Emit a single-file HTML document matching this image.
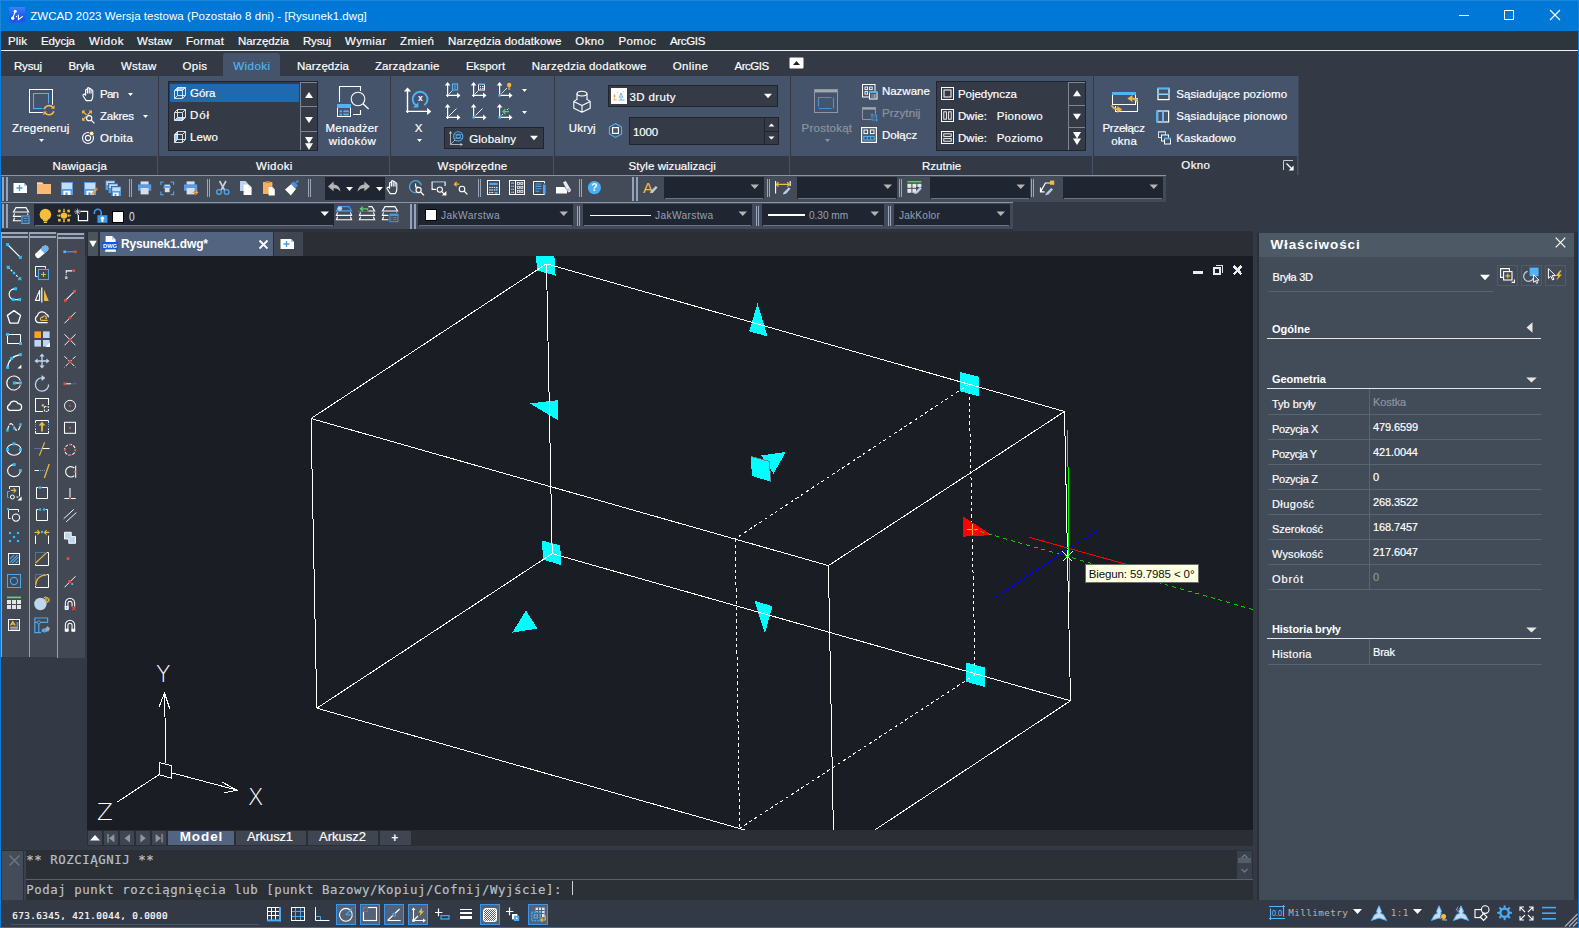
<!DOCTYPE html>
<html lang="pl">
<head>
<meta charset="utf-8">
<title>ZWCAD 2023 Wersja testowa (Pozostało 8 dni) - [Rysunek1.dwg]</title>
<style>
*{margin:0;padding:0;box-sizing:border-box}
html,body{width:1579px;height:928px;overflow:hidden;background:#333a46}
body{position:relative;font-family:'Liberation Sans',sans-serif;font-size:11.5px;color:#fff}
#app{position:absolute;left:0;top:0;width:1579px;height:928px;overflow:hidden}
#app div,#app svg,#app .t{position:absolute}
#app svg{overflow:visible;display:block}
.t{white-space:pre;line-height:20px;height:20px;-webkit-text-stroke:0.18px currentColor}
</style>
</head>
<body>
<div id="app">
<div style="left:0px;top:0px;width:1579px;height:928px;background:#333a46;"></div>
<div style="left:0px;top:0px;width:1579px;height:31px;background:#0078d7;"></div>
<span class="t" style="left:30.20px;top:6.02px;font-size:11.5px;color:#fff;letter-spacing:0.043px;-webkit-text-stroke:0;">ZWCAD 2023 Wersja testowa (Pozostało 8 dni) - [Rysunek1.dwg]</span>
<div style="left:0px;top:0px;width:1579px;height:1px;background:#1a86dc;"></div>
<div style="left:0px;top:0px;width:1px;height:31px;background:#1a86dc;"></div>
<div style="left:1578px;top:0px;width:1px;height:31px;background:#1a86dc;"></div>
<svg style="left:9px;top:7px;" width="16" height="16" viewBox="0 0 16 16"><defs><linearGradient id="zw" x1="0" y1="0" x2="0" y2="1"><stop offset="0" stop-color="#3d80ff"/><stop offset="0.75" stop-color="#1650f0"/><stop offset="1" stop-color="#3058e8"/></linearGradient></defs><rect width="16" height="16" fill="url(#zw)"/><path d="M6.2 4.4L3.8 11" stroke="#fff" stroke-width="1.1" fill="none"/><circle cx="6.2" cy="4.2" r="1.5" fill="#fff"/><circle cx="3.7" cy="11.2" r="1.7" fill="#fff"/><circle cx="7.5" cy="9.5" r="0.7" fill="#fff"/><path d="M9.4 7.8V12.6L13.8 9.2" stroke="#fff" stroke-width="1.1" fill="none"/></svg>
<svg style="left:1458px;top:9px;" width="103" height="12" viewBox="0 0 103 12"><path d="M1 6.5h10" stroke="#fff" stroke-width="1" fill="none"/><rect x="46.5" y="1.5" width="9" height="9" fill="none" stroke="#fff" stroke-width="1"/><path d="M92 1l10 10M102 1l-10 10" stroke="#fff" stroke-width="1.1" fill="none"/></svg>
<div style="left:1px;top:31px;width:1577px;height:19px;background:#2d353d;"></div>
<div style="left:1px;top:50px;width:1577px;height:1px;background:#f2f2f2;"></div>
<span class="t" style="left:8.00px;top:30.92px;font-size:11.5px;color:#fff;letter-spacing:0.156px;">Plik</span>
<span class="t" style="left:41.00px;top:30.92px;font-size:11.5px;color:#fff;letter-spacing:-0.106px;">Edycja</span>
<span class="t" style="left:89.00px;top:30.92px;font-size:11.5px;color:#fff;letter-spacing:0.637px;">Widok</span>
<span class="t" style="left:137.00px;top:30.92px;font-size:11.5px;color:#fff;letter-spacing:0.125px;">Wstaw</span>
<span class="t" style="left:186.00px;top:30.92px;font-size:11.5px;color:#fff;letter-spacing:0.316px;">Format</span>
<span class="t" style="left:238.00px;top:30.92px;font-size:11.5px;color:#fff;letter-spacing:-0.098px;">Narzędzia</span>
<span class="t" style="left:303.00px;top:30.92px;font-size:11.5px;color:#fff;letter-spacing:-0.191px;">Rysuj</span>
<span class="t" style="left:345.00px;top:30.92px;font-size:11.5px;color:#fff;letter-spacing:0.425px;">Wymiar</span>
<span class="t" style="left:400.00px;top:30.92px;font-size:11.5px;color:#fff;letter-spacing:0.512px;">Zmień</span>
<span class="t" style="left:448.00px;top:30.92px;font-size:11.5px;color:#fff;letter-spacing:0.156px;">Narzędzia dodatkowe</span>
<span class="t" style="left:575.30px;top:30.92px;font-size:11.5px;color:#fff;letter-spacing:0.400px;">Okno</span>
<span class="t" style="left:618.40px;top:30.92px;font-size:11.5px;color:#fff;letter-spacing:0.451px;">Pomoc</span>
<span class="t" style="left:670.00px;top:30.92px;font-size:11.5px;color:#fff;letter-spacing:-0.353px;">ArcGIS</span>
<div style="left:1px;top:51px;width:1577px;height:25px;background:#333a46;"></div>
<div style="left:223px;top:53px;width:57px;height:23px;background:#46546b;border-radius:3px 3px 0 0;"></div>
<span class="t" style="left:14.00px;top:55.72px;font-size:11.5px;color:#fff;letter-spacing:-0.191px;">Rysuj</span>
<span class="t" style="left:68.40px;top:55.72px;font-size:11.5px;color:#fff;letter-spacing:-0.026px;">Bryła</span>
<span class="t" style="left:121.00px;top:55.72px;font-size:11.5px;color:#fff;letter-spacing:0.200px;">Wstaw</span>
<span class="t" style="left:182.50px;top:55.72px;font-size:11.5px;color:#fff;letter-spacing:0.281px;">Opis</span>
<span class="t" style="left:233.30px;top:55.72px;font-size:11.5px;color:#4fb6f0;letter-spacing:0.437px;">Widoki</span>
<span class="t" style="left:297.00px;top:55.72px;font-size:11.5px;color:#fff;letter-spacing:0.027px;">Narzędzia</span>
<span class="t" style="left:375.00px;top:55.72px;font-size:11.5px;color:#fff;letter-spacing:0.100px;">Zarządzanie</span>
<span class="t" style="left:465.90px;top:55.72px;font-size:11.5px;color:#fff;letter-spacing:0.033px;">Eksport</span>
<span class="t" style="left:531.70px;top:55.72px;font-size:11.5px;color:#fff;letter-spacing:0.234px;">Narzędzia dodatkowe</span>
<span class="t" style="left:672.80px;top:55.72px;font-size:11.5px;color:#fff;letter-spacing:0.350px;">Online</span>
<span class="t" style="left:734.40px;top:55.72px;font-size:11.5px;color:#fff;letter-spacing:-0.433px;">ArcGIS</span>
<div style="left:1px;top:76px;width:157px;height:80px;background:#46546b;"></div>
<div style="left:157px;top:156px;width:1px;height:19px;background:#46546b;"></div>
<span class="t" style="left:52.60px;top:156.02px;font-size:11.5px;color:#fff;letter-spacing:0.142px;">Nawigacja</span>
<div style="left:159px;top:76px;width:231px;height:80px;background:#46546b;"></div>
<div style="left:389px;top:156px;width:1px;height:19px;background:#46546b;"></div>
<span class="t" style="left:255.90px;top:156.02px;font-size:11.5px;color:#fff;letter-spacing:0.397px;">Widoki</span>
<div style="left:391px;top:76px;width:163px;height:80px;background:#46546b;"></div>
<div style="left:553px;top:156px;width:1px;height:19px;background:#46546b;"></div>
<span class="t" style="left:437.60px;top:156.02px;font-size:11.5px;color:#fff;letter-spacing:0.247px;">Współrzędne</span>
<div style="left:555px;top:76px;width:235px;height:80px;background:#46546b;"></div>
<div style="left:789px;top:156px;width:1px;height:19px;background:#46546b;"></div>
<span class="t" style="left:628.60px;top:156.02px;font-size:11.5px;color:#fff;letter-spacing:0.048px;">Style wizualizacji</span>
<div style="left:791px;top:76px;width:302px;height:80px;background:#46546b;"></div>
<div style="left:1092px;top:156px;width:1px;height:19px;background:#46546b;"></div>
<span class="t" style="left:922.00px;top:156.02px;font-size:11.5px;color:#fff;letter-spacing:0.033px;">Rzutnie</span>
<div style="left:1094px;top:76px;width:204px;height:80px;background:#46546b;"></div>
<div style="left:1297px;top:156px;width:1px;height:19px;background:#46546b;"></div>
<span class="t" style="left:1181.30px;top:155.02px;font-size:11.5px;color:#fff;letter-spacing:0.400px;">Okno</span>
<div style="left:1298px;top:76px;width:1px;height:99px;background:#3c4658;"></div>
<div style="left:1px;top:175px;width:1165px;height:1px;background:#8895a8;"></div>
<div style="left:1px;top:176px;width:1165px;height:26px;background:#444b58;"></div>
<div style="left:1px;top:202px;width:1012px;height:1px;background:#8895a8;"></div>
<div style="left:1px;top:203px;width:1012px;height:26px;background:#444b58;"></div>
<div style="left:1px;top:229px;width:1012px;height:3px;background:#2e333b;"></div>
<div style="left:1013px;top:231px;width:240px;height:1px;background:#2c3037;"></div>
<svg style="left:29px;top:89px;" width="28" height="28" viewBox="0 0 28 28"><rect x="0.5" y="0.5" width="23" height="23" fill="none" stroke="#ffffff" stroke-width="1"/><rect x="4.5" y="4.5" width="15" height="15" fill="none" stroke="#4fb3f6" stroke-width="1"/><circle cx="20" cy="21.2" r="6.6" fill="#46546b"/><path d="M15.2 20.2A5 5 0 0 1 24 18.6M24.8 22.2A5 5 0 0 1 16 23.8" fill="none" stroke="#f0b840" stroke-width="1.6" /><path d="M25.6 16.2v3.6h-3.6z M14.4 26.2v-3.6h3.6z" fill="#f0b840" /></svg>
<span class="t" style="left:12.00px;top:118.02px;font-size:11.5px;color:#fff;letter-spacing:0.197px;">Zregeneruj</span>
<svg style="left:38px;top:138px;" width="8" height="6" viewBox="0 0 8 6"><path d="M1.00 1.00h5l-2.5 3z" fill="#fff"/></svg>
<svg style="left:82px;top:87px;" width="13" height="15" viewBox="0 0 13 15"><path d="M4.2 13.6 L1.3 9.3 Q0.4 7.6 1.8 7.2 Q2.8 7 3.6 8.3 V3.2 Q3.6 2.2 4.5 2.2 Q5.4 2.2 5.4 3.2 V1.6 Q5.4 0.6 6.3 0.6 Q7.2 0.6 7.2 1.6 V2.2 Q7.2 1.3 8.1 1.3 Q9 1.3 9 2.3 V3.5 Q9 2.7 9.9 2.7 Q10.8 2.7 10.8 3.7 V9.6 Q10.8 11.6 9.2 13.6 ZM5.4 3.2V6.5M7.2 2.2V6.5M9 3.5V6.5" fill="none" stroke="#ffffff" stroke-width="1.1" stroke-linejoin="round"/></svg>
<span class="t" style="left:100.00px;top:84.02px;font-size:11.5px;color:#fff;letter-spacing:-0.734px;">Pan</span>
<svg style="left:127px;top:92px;" width="8" height="6" viewBox="0 0 8 6"><path d="M1.00 1.00h5l-2.5 3z" fill="#fff"/></svg>
<svg style="left:82px;top:110px;" width="13" height="14" viewBox="0 0 13 14"><path d="M1 1.5L4.6 5.1M9 1.5L5.6 4.9M1 9.8L4.2 6.6" fill="none" stroke="#f0b840" stroke-width="1.3" /><path d="M0 0.5h3.6L0 4.1zM10 0.5h-3.6L10 4.1zM0 10.8h3.6L0 7.2z" fill="#f0b840" /><circle cx="7.2" cy="8.2" r="2.6" fill="none" stroke="#ffffff" stroke-width="1.1"/><path d="M9.2 10.2L12.4 13.4" fill="none" stroke="#ffffff" stroke-width="1.2" /></svg>
<span class="t" style="left:100.00px;top:106.02px;font-size:11.5px;color:#fff;letter-spacing:-0.231px;">Zakres</span>
<svg style="left:142px;top:114px;" width="8" height="6" viewBox="0 0 8 6"><path d="M1.00 1.00h5l-2.5 3z" fill="#fff"/></svg>
<svg style="left:82px;top:131px;" width="13" height="14" viewBox="0 0 13 14"><circle cx="6" cy="7" r="5.5" fill="none" stroke="#ffffff" stroke-width="1.1"/><circle cx="6" cy="7" r="2.6" fill="none" stroke="#ffffff" stroke-width="1.1"/><circle cx="9.6" cy="2.6" r="2.6" fill="#46546b"/><circle cx="9.6" cy="2.6" r="2" fill="#ffe08a"/><circle cx="9.6" cy="2.6" r="1" fill="#fff"/></svg>
<span class="t" style="left:100.00px;top:128.02px;font-size:11.5px;color:#fff;letter-spacing:0.334px;">Orbita</span>
<div style="left:168px;top:81px;width:150px;height:70px;background:#343b47;border:1px solid #20252d;"></div>
<div style="left:300px;top:82px;width:1px;height:68px;background:#7d8693;"></div>
<div style="left:300px;top:82px;width:17px;height:1px;background:#7d8693;"></div>
<div style="left:300px;top:106px;width:17px;height:1px;background:#7d8693;"></div>
<div style="left:300px;top:131px;width:17px;height:1px;background:#7d8693;"></div>
<div style="left:170px;top:84px;width:129px;height:18px;background:#1f69ae;"></div>
<svg style="left:174px;top:87px;" width="12" height="12" viewBox="0 0 12 12"><path d="M0.5 3.5L3.5 0.5H11.5L8.5 3.5Z" fill="#9fd0fa" /><path d="M0.5 3.5H8.5V11.5H0.5ZM3.5 0.5H11.5V8.5H3.5ZM0.5 3.5L3.5 0.5M8.5 3.5L11.5 0.5M8.5 11.5L11.5 8.5M0.5 11.5L3.5 8.5" fill="none" stroke="#e8eef5" stroke-width="0.9" /></svg>
<span class="t" style="left:190.00px;top:83.32px;font-size:11.5px;color:#fff;letter-spacing:-0.059px;">Góra</span>
<svg style="left:174px;top:109px;" width="12" height="12" viewBox="0 0 12 12"><path d="M0.5 11.5L3.5 8.5H11.5L8.5 11.5Z" fill="#9fd0fa" /><path d="M0.5 3.5H8.5V11.5H0.5ZM3.5 0.5H11.5V8.5H3.5ZM0.5 3.5L3.5 0.5M8.5 3.5L11.5 0.5M8.5 11.5L11.5 8.5M0.5 11.5L3.5 8.5" fill="none" stroke="#e8eef5" stroke-width="0.9" /></svg>
<span class="t" style="left:190.00px;top:105.32px;font-size:11.5px;color:#fff;letter-spacing:0.867px;">Dół</span>
<svg style="left:174px;top:131px;" width="12" height="12" viewBox="0 0 12 12"><path d="M0.5 3.5L3.5 0.5V8.5L0.5 11.5Z" fill="#9fd0fa" /><path d="M0.5 3.5H8.5V11.5H0.5ZM3.5 0.5H11.5V8.5H3.5ZM0.5 3.5L3.5 0.5M8.5 3.5L11.5 0.5M8.5 11.5L11.5 8.5M0.5 11.5L3.5 8.5" fill="none" stroke="#e8eef5" stroke-width="0.9" /></svg>
<span class="t" style="left:190.00px;top:127.32px;font-size:11.5px;color:#fff;letter-spacing:0.100px;">Lewo</span>
<svg style="left:300px;top:81px;" width="18" height="70" viewBox="0 0 18 70"><path d="M5 17L9 11L13 17Z" fill="#ffffff" /><path d="M5 36H13L9 42Z" fill="#ffffff" /><path d="M5 55.9H13L9 62.5ZM5 62.3H13L9 68.89999999999999Z" fill="#ffffff" /></svg>
<svg style="left:337px;top:85px;" width="33" height="33" viewBox="0 0 33 33"><path d="M2.5 17V1.5H23.5V6M23.5 25V29.5H16" fill="none" stroke="#ffffff" stroke-width="1.1" /><circle cx="21" cy="14" r="6.8" fill="none" stroke="#ffffff" stroke-width="1.1"/><path d="M26 18.8L31.6 24" fill="none" stroke="#ffffff" stroke-width="1.3" /><rect x="0" y="19" width="15" height="14" fill="#46546b"/><rect x="0.5" y="19.5" width="13" height="12" fill="none" stroke="#ffffff" stroke-width="1"/><rect x="0" y="19" width="14" height="4" fill="#4fb3f6"/><rect x="2.6" y="25.4" width="2.4" height="1.8" fill="#4fb3f6"/><rect x="6.4" y="25.4" width="5.4" height="1.8" fill="#4fb3f6"/><rect x="2.6" y="28.6" width="2.4" height="1.8" fill="#4fb3f6"/><rect x="6.4" y="28.6" width="5.4" height="1.8" fill="#4fb3f6"/></svg>
<span class="t" style="left:325.50px;top:118.02px;font-size:11.5px;color:#fff;letter-spacing:0.223px;">Menadżer</span>
<span class="t" style="left:328.70px;top:130.52px;font-size:11.5px;color:#fff;letter-spacing:0.515px;">widoków</span>
<svg style="left:404px;top:87px;" width="28" height="28" viewBox="0 0 28 28"><path d="M3.5 25.9V1.7M2.0 24.4H26" fill="none" stroke="#ffffff" stroke-width="1.4" /><path d="M3.5 0.39999999999999997l3.6 4.2h-7.2z M27.3 24.4l-4.2 -3.6v7.2z" fill="#ffffff" /><path d="M12.4 18.6A7.4 7.4 0 1 1 20.4 18.2" fill="none" stroke="#4fb3f6" stroke-width="1.9" /><path d="M9 20.4h5.4v-5.2z" fill="#4fb3f6" /><text x="16.4" y="14.2" font-size="8.5" font-weight="700" text-anchor="middle" fill="#fff" font-family="Liberation Sans,sans-serif">x</text></svg>
<span class="t" style="left:414.80px;top:118.02px;font-size:11.5px;color:#fff;">X</span>
<svg style="left:416px;top:138px;" width="8" height="6" viewBox="0 0 8 6"><path d="M1.00 1.00h5l-2.5 3z" fill="#fff"/></svg>
<svg style="left:445px;top:82px;" width="16" height="16" viewBox="0 0 16 16"><path d="M2.6 14.9V1.4M1.1 13.4H14.2" fill="none" stroke="#ffffff" stroke-width="1.2" /><path d="M2.6 0.10000000000000003l2.8000000000000003 3.4000000000000004h-5.6000000000000005z M15.5 13.4l-3.4000000000000004 -2.8000000000000003v5.6000000000000005z" fill="#ffffff" /><path d="M3.5 12.5L7.5 8.5" fill="none" stroke="#ffffff" stroke-width="0.8" /><rect x="7.5" y="2" width="5" height="6" fill="none" stroke="#4fb3f6" stroke-width="1.2"/><path d="M9 4h2M9 6h2" fill="none" stroke="#4fb3f6" stroke-width="0.9" /></svg>
<svg style="left:471px;top:82px;" width="16" height="16" viewBox="0 0 16 16"><path d="M2.6 14.9V1.4M1.1 13.4H14.2" fill="none" stroke="#ffffff" stroke-width="1.2" /><path d="M2.6 0.10000000000000003l2.8000000000000003 3.4000000000000004h-5.6000000000000005z M15.5 13.4l-3.4000000000000004 -2.8000000000000003v5.6000000000000005z" fill="#ffffff" /><path d="M3.5 12.5L7.5 8.5" fill="none" stroke="#ffffff" stroke-width="0.8" /><rect x="7.5" y="2.5" width="6" height="5.5" fill="none" stroke="#ffffff" stroke-width="1"/><rect x="7" y="1.5" width="7" height="1.4" fill="#4fb3f6"/><path d="M9 4.6h1M11 4.6h1.6M9 6.4h1M11 6.4h1.6" fill="none" stroke="#ffffff" stroke-width="0.9" /></svg>
<svg style="left:497px;top:82px;" width="16" height="16" viewBox="0 0 16 16"><path d="M2.6 13.4V1.4M2.6 13.4H14.2" fill="none" stroke="#ffffff" stroke-width="1.2" /><path d="M2.6 0.10000000000000003l2.8000000000000003 3.4000000000000004h-5.6000000000000005z M15.5 13.4l-3.4000000000000004 -2.8000000000000003v5.6000000000000005z" fill="#ffffff" /><rect x="1.4" y="12.2" width="2.4" height="2.4" fill="#4fb3f6"/><path d="M4.4 11.6L10 6" fill="none" stroke="#ffffff" stroke-width="0.8" /><circle cx="12.2" cy="3" r="2.2" fill="#f0b840"/><rect x="11.2" y="5.4" width="2" height="1.2" fill="#f0b840"/><rect x="11.2" y="6.9" width="2" height="0.8" fill="#f0b840"/></svg>
<svg style="left:521px;top:88px;" width="8" height="6" viewBox="0 0 8 6"><path d="M1.00 1.00h5l-2.5 3z" fill="#fff"/></svg>
<svg style="left:445px;top:104px;" width="16" height="16" viewBox="0 0 16 16"><path d="M2.6 14.9V1.4M1.1 13.4H14.2" fill="none" stroke="#ffffff" stroke-width="1.2" /><path d="M2.6 0.10000000000000003l2.8000000000000003 3.4000000000000004h-5.6000000000000005z M15.5 13.4l-3.4000000000000004 -2.8000000000000003v5.6000000000000005z" fill="#ffffff" /><path d="M3.5 12.5L11.5 4.5" fill="none" stroke="#ffffff" stroke-width="0.9" /></svg>
<svg style="left:471px;top:104px;" width="16" height="16" viewBox="0 0 16 16"><path d="M2.6 13.4V1.4M2.6 13.4H14.2" fill="none" stroke="#ffffff" stroke-width="1.2" /><path d="M2.6 0.10000000000000003l2.8000000000000003 3.4000000000000004h-5.6000000000000005z M15.5 13.4l-3.4000000000000004 -2.8000000000000003v5.6000000000000005z" fill="#ffffff" /><rect x="1.4" y="12.2" width="2.4" height="2.4" fill="#4fb3f6"/><path d="M4.6 11.4L11.5 4.5" fill="none" stroke="#ffffff" stroke-width="0.9" /></svg>
<svg style="left:497px;top:104px;" width="16" height="16" viewBox="0 0 16 16"><path d="M2.6 13.4V1.4M2.6 13.4H14.2" fill="none" stroke="#ffffff" stroke-width="1.2" /><path d="M2.6 0.10000000000000003l2.8000000000000003 3.4000000000000004h-5.6000000000000005z M15.5 13.4l-3.4000000000000004 -2.8000000000000003v5.6000000000000005z" fill="#ffffff" /><rect x="1.4" y="12.2" width="2.4" height="2.4" fill="#4fb3f6"/><path d="M4.6 11.4L6 10M10 6L11.5 4.5" fill="none" stroke="#ffffff" stroke-width="0.8" /><path d="M12 7.6H6.2M8.4 5.2L6 7.6L8.4 10" fill="none" stroke="#5fd068" stroke-width="1.3" /></svg>
<svg style="left:521px;top:110px;" width="8" height="6" viewBox="0 0 8 6"><path d="M1.00 1.00h5l-2.5 3z" fill="#fff"/></svg>
<div style="left:444px;top:127px;width:100px;height:22px;background:#343b47;border:1px solid #20252d;"></div>
<svg style="left:448px;top:131px;" width="16" height="16" viewBox="0 0 16 16"><path d="M2.5 13.5V1.5M2.5 13.5H14M2.5 13.5L7 9" fill="none" stroke="#c9ced6" stroke-width="0.8" /><path d="M2.5 0l1.6 2.6h-3.2zM15 13.5l-2.6 1.6v-3.2z" fill="#c9ced6" /><circle cx="10.2" cy="5.4" r="4.6" fill="none" stroke="#4fb3f6" stroke-width="1.1"/><circle cx="10.2" cy="5.4" r="2.2" fill="none" stroke="#4fb3f6" stroke-width="1"/><path d="M6.2 3.2q4 2 8 0M6.2 7.6q4-2 8 0" fill="none" stroke="#4fb3f6" stroke-width="0.7" /></svg>
<span class="t" style="left:469.20px;top:129.02px;font-size:11.5px;color:#fff;letter-spacing:0.216px;">Globalny</span>
<svg style="left:529px;top:134px;" width="11" height="7" viewBox="0 0 11 7"><path d="M1.00 1.75h8l-4.0 4.5z" fill="#fff"/></svg>
<svg style="left:573px;top:90px;" width="18" height="23" viewBox="0 0 18 23"><ellipse cx="9" cy="3.6" rx="5" ry="2.4" fill="none" stroke="#ffffff" stroke-width="1.1"/><path d="M4 3.6V10M14 3.6V10" fill="none" stroke="#ffffff" stroke-width="1.1" /><path d="M4 9.4L0.8 11.4V18.2L9 22.2L17.2 18.2V11.4L14 9.4M0.8 11.6L9 15.4L17.2 11.6M9 15.4V22" fill="none" stroke="#ffffff" stroke-width="1.1" stroke-linejoin="round"/></svg>
<span class="t" style="left:568.70px;top:118.02px;font-size:11.5px;color:#fff;letter-spacing:0.199px;">Ukryj</span>
<div style="left:608px;top:85px;width:170px;height:22px;background:#343b47;border:1px solid #20252d;"></div>
<svg style="left:611px;top:88px;" width="16" height="16" viewBox="0 0 16 16"><rect x="0" y="0" width="16" height="16" fill="#fff"/><path d="M2 8h3M3.5 6v6M2 12h4" fill="none" stroke="#f0b45a" stroke-width="0.9" /><path d="M8 10l2-5l2 5M7.5 12h6M10 8v4" fill="none" stroke="#6aa6e0" stroke-width="0.9" /><path d="M6 4.5h1M12 3.5h1" fill="none" stroke="#f0b45a" stroke-width="0.8" /></svg>
<span class="t" style="left:629.40px;top:86.72px;font-size:11.5px;color:#fff;letter-spacing:0.390px;">3D druty</span>
<svg style="left:763px;top:92px;" width="11" height="7" viewBox="0 0 11 7"><path d="M1.00 1.75h8l-4.0 4.5z" fill="#fff"/></svg>
<svg style="left:608px;top:123px;" width="15" height="15" viewBox="0 0 15 15"><path d="M7.5 0.6L13.6 4V11L7.5 14.4L1.4 11V4Z" fill="none" stroke="#4fb3f6" stroke-width="1.1" /><rect x="4.6" y="4.6" width="5.8" height="5.8" fill="none" stroke="#ffffff" stroke-width="1.2"/></svg>
<div style="left:629px;top:117px;width:150px;height:28px;background:#343b47;border:1px solid #20252d;"></div>
<div style="left:764px;top:118px;width:1px;height:26px;background:#20252d;"></div>
<div style="left:764px;top:131px;width:14px;height:1px;background:#20252d;"></div>
<span class="t" style="left:632.90px;top:121.82px;font-size:11.5px;color:#fff;letter-spacing:-0.098px;">1000</span>
<svg style="left:767px;top:121px;" width="10" height="20" viewBox="0 0 10 20"><path d="M1.5 5.5l3-3l3 3z M1.5 15.5l3 3l3-3z" fill="#fff"/></svg>
<svg style="left:814px;top:89px;" width="24" height="24" viewBox="0 0 24 24"><rect x="0" y="0" width="24" height="3.4" fill="#a2a8b1"/><rect x="0.5" y="0.5" width="23" height="23" fill="none" stroke="#9097a1" stroke-width="1"/><path d="M4.5 8.5H19.5V19.5H4.5Z" fill="none" stroke="#4b8fc8" stroke-width="1.2" stroke-dasharray="13 2 11 2"/></svg>
<span class="t" style="left:801.60px;top:118.02px;font-size:11.5px;color:#8e949d;letter-spacing:0.228px;">Prostokąt</span>
<svg style="left:824px;top:138px;" width="8" height="6" viewBox="0 0 8 6"><path d="M1.00 1.00h5l-2.5 3z" fill="#8e949d"/></svg>
<svg style="left:862px;top:84px;" width="16" height="16" viewBox="0 0 16 16"><rect x="0.5" y="0.5" width="12.5" height="12.5" fill="none" stroke="#ffffff" stroke-width="1"/><rect x="3" y="3" width="2.6" height="2.6" fill="none" stroke="#ffffff" stroke-width="0.9"/><rect x="7.6" y="3" width="2.6" height="2.6" fill="none" stroke="#ffffff" stroke-width="0.9"/><rect x="3" y="7.6" width="2.6" height="2.6" fill="none" stroke="#ffffff" stroke-width="0.9"/><rect x="7" y="7" width="9" height="9" fill="#46546b"/><rect x="7.5" y="8.5" width="7.5" height="6.5" fill="none" stroke="#ffffff" stroke-width="1"/><rect x="7" y="7" width="8.5" height="2" fill="#4fb3f6"/><path d="M9.5 11h1M11.5 11h2M9.5 13h1M11.5 13h2" fill="none" stroke="#ffffff" stroke-width="0.9" /></svg>
<span class="t" style="left:881.90px;top:80.82px;font-size:11.5px;color:#fff;letter-spacing:0.008px;">Nazwane</span>
<svg style="left:862px;top:106px;" width="16" height="16" viewBox="0 0 16 16"><rect x="0" y="1" width="14" height="2.6" fill="#a2a8b1"/><path d="M0.5 1.5H13.5V8M9 13.5H0.5V1.5" fill="none" stroke="#9097a1" stroke-width="1" /><path d="M10 7.5V14H16M8.5 9H14.5V15.5" fill="none" stroke="#4b8fc8" stroke-width="1.1" /><path d="M11.5 12L13.5 10" fill="none" stroke="#4b8fc8" stroke-width="0.9" /></svg>
<span class="t" style="left:881.90px;top:102.82px;font-size:11.5px;color:#8e949d;letter-spacing:0.114px;">Przytnij</span>
<svg style="left:861px;top:127px;" width="16" height="16" viewBox="0 0 16 16"><rect x="0.6" y="0.6" width="14.8" height="14.8" fill="none" stroke="#ffffff" stroke-width="1.2"/><rect x="3" y="3" width="3.6" height="3.6" fill="none" stroke="#ffffff" stroke-width="1"/><rect x="9.4" y="3" width="3.6" height="3.6" fill="none" stroke="#ffffff" stroke-width="1"/><rect x="2.8" y="9.4" width="10.4" height="3.6" fill="none" stroke="#4fb3f6" stroke-width="1.1"/><path d="M6.3 9.4v3.6M9.7 9.4v3.6" fill="none" stroke="#4fb3f6" stroke-width="1" /></svg>
<span class="t" style="left:881.90px;top:124.82px;font-size:11.5px;color:#fff;letter-spacing:0.029px;">Dołącz</span>
<div style="left:936px;top:81px;width:150px;height:70px;background:#343b47;border:1px solid #20252d;"></div>
<div style="left:1068px;top:82px;width:1px;height:68px;background:#7d8693;"></div>
<div style="left:1068px;top:82px;width:17px;height:1px;background:#7d8693;"></div>
<div style="left:1068px;top:105px;width:17px;height:1px;background:#7d8693;"></div>
<div style="left:1068px;top:127px;width:17px;height:1px;background:#7d8693;"></div>
<svg style="left:941px;top:87px;" width="13" height="13" viewBox="0 0 13 13"><rect x="0.5" y="0.5" width="12" height="12" fill="none" stroke="#ffffff" stroke-width="1"/><rect x="3" y="3" width="7" height="7" fill="none" stroke="#ffffff" stroke-width="1"/></svg>
<span class="t" style="left:958.00px;top:83.72px;font-size:11.5px;color:#fff;letter-spacing:-0.052px;">Pojedyncza</span>
<svg style="left:941px;top:109px;" width="13" height="13" viewBox="0 0 13 13"><rect x="0.5" y="0.5" width="12" height="12" fill="none" stroke="#ffffff" stroke-width="1"/><rect x="2.8" y="2.8" width="2.6" height="7.4" fill="none" stroke="#ffffff" stroke-width="0.9"/><rect x="7.6" y="2.8" width="2.6" height="7.4" fill="none" stroke="#ffffff" stroke-width="0.9"/></svg>
<span class="t" style="left:958.00px;top:105.72px;font-size:11.5px;color:#fff;letter-spacing:0.034px;">Dwie:</span>
<svg style="left:941px;top:131px;" width="13" height="13" viewBox="0 0 13 13"><rect x="0.5" y="0.5" width="12" height="12" fill="none" stroke="#ffffff" stroke-width="1"/><rect x="2.8" y="2.8" width="7.4" height="2.6" fill="none" stroke="#ffffff" stroke-width="0.9"/><rect x="2.8" y="7.6" width="7.4" height="2.6" fill="none" stroke="#ffffff" stroke-width="0.9"/></svg>
<span class="t" style="left:958.00px;top:127.72px;font-size:11.5px;color:#fff;letter-spacing:0.034px;">Dwie:</span>
<span class="t" style="left:996.70px;top:105.72px;font-size:11.5px;color:#fff;letter-spacing:0.312px;">Pionowo</span>
<span class="t" style="left:996.70px;top:127.72px;font-size:11.5px;color:#fff;letter-spacing:0.208px;">Poziomo</span>
<svg style="left:1068px;top:81px;" width="18" height="70" viewBox="0 0 18 70"><path d="M5 15.3L9 9.3L13 15.3Z" fill="#ffffff" /><path d="M5 32.7H13L9 38.7Z" fill="#ffffff" /><path d="M5 51.1H13L9 57.7ZM5 57.5H13L9 64.1Z" fill="#ffffff" /></svg>
<svg style="left:1110px;top:90px;" width="30" height="24" viewBox="0 0 30 24"><rect x="5.5" y="8.5" width="22" height="13" fill="none" stroke="#ffffff" stroke-width="1"/><rect x="2" y="2" width="24" height="14" fill="#46546b"/><rect x="2.5" y="2.5" width="23" height="12" fill="none" stroke="#ffffff" stroke-width="1"/><rect x="2" y="2" width="24" height="3" fill="#4fb3f6"/><rect x="23" y="8.6" width="5" height="1.6" fill="#4fb3f6"/><path d="M19.5 8.6Q25 7.6 27.6 12" fill="none" stroke="#f0b840" stroke-width="1.8" /><path d="M17.4 8.6L22.4 5V12Z" fill="#f0b840" /><path d="M10.2 19.4Q4 20 1.6 15.4" fill="none" stroke="#f0b840" stroke-width="1.8" /><path d="M12.2 19.4L7.2 16V23Z" fill="#f0b840" /></svg>
<span class="t" style="left:1102.40px;top:118.32px;font-size:11.5px;color:#fff;letter-spacing:-0.230px;">Przełącz</span>
<span class="t" style="left:1111.20px;top:130.62px;font-size:11.5px;color:#fff;letter-spacing:0.254px;">okna</span>
<svg style="left:1157px;top:87px;" width="13" height="13" viewBox="0 0 13 13"><rect x="1" y="1.6" width="11" height="11" fill="none" stroke="#ffffff" stroke-width="1.2"/><path d="M1 7.4H12" fill="none" stroke="#ffffff" stroke-width="1.2" /><rect x="0.4" y="0.4" width="12.2" height="1.8" fill="#4fb3f6"/><rect x="0.4" y="6.4" width="12.2" height="1.2" fill="#4fb3f6"/></svg>
<span class="t" style="left:1176.30px;top:84.32px;font-size:11.5px;color:#fff;letter-spacing:0.082px;">Sąsiadujące poziomo</span>
<svg style="left:1156px;top:110px;" width="13" height="13" viewBox="0 0 13 13"><rect x="1.6" y="1" width="11" height="11" fill="none" stroke="#ffffff" stroke-width="1.2"/><path d="M7 1V12" fill="none" stroke="#ffffff" stroke-width="1.2" /><rect x="0" y="0.4" width="2" height="12.2" fill="#4fb3f6"/><rect x="6.2" y="0.4" width="1.4" height="12.2" fill="#4fb3f6"/></svg>
<span class="t" style="left:1176.30px;top:106.32px;font-size:11.5px;color:#fff;letter-spacing:0.116px;">Sąsiadujące pionowo</span>
<svg style="left:1157px;top:130px;" width="14" height="14" viewBox="0 0 14 14"><rect x="1.5" y="1.5" width="7" height="6" fill="none" stroke="#d5dde8" stroke-width="1"/><rect x="1" y="1" width="8" height="1.6" fill="#a9c3e2"/><rect x="4" y="4.6" width="8" height="7" fill="#46546b"/><rect x="4.5" y="5" width="7" height="6" fill="none" stroke="#ffffff" stroke-width="1"/><rect x="7" y="8" width="7" height="6.6" fill="#46546b"/><rect x="7.5" y="8.5" width="6" height="5.5" fill="none" stroke="#ffffff" stroke-width="1"/><rect x="7" y="7.6" width="7" height="1.8" fill="#4fb3f6"/></svg>
<span class="t" style="left:1176.30px;top:128.22px;font-size:11.5px;color:#fff;letter-spacing:0.029px;">Kaskadowo</span>
<svg style="left:1283px;top:160px;" width="11" height="11" viewBox="0 0 11 11"><path d="M10 0.5H0.5V10" fill="none" stroke="#c8cdd5" stroke-width="1" /><path d="M3.5 3.5L9.5 9.5" fill="none" stroke="#ffffff" stroke-width="1.2" /><path d="M10.6 10.6H5.6L10.6 5.6Z" fill="#ffffff" /></svg>
<svg style="left:789px;top:57px;" width="15" height="12" viewBox="0 0 15 12"><rect x="0.5" y="0.5" width="14" height="11" rx="1" fill="#fff"/><path d="M4 8l3.5-4l3.5 4z" fill="#222"/></svg>
<div style="left:2px;top:177px;width:2px;height:24px;background:#93a3bd;"></div>
<div style="left:6px;top:177px;width:2px;height:24px;background:#93a3bd;"></div>
<svg style="left:13px;top:180px;" width="16" height="16" viewBox="0 0 16 16"><path d="M0.5 3H11L14 6V13H0.5Z" fill="#ffffff" /><path d="M11 3L14 6H11Z" fill="#9cc7f2" /><path d="M3.5 8h6M6.5 5v6" fill="none" stroke="#3f9ae8" stroke-width="1.3" /></svg>
<svg style="left:36px;top:180px;" width="16" height="16" viewBox="0 0 16 16"><path d="M1 2.4H6.2L7.4 4H15V14H1Z" fill="#f9b977" /><path d="M1 2.4H6.2L7.4 4H1Z" fill="#fcdca6" /></svg>
<svg style="left:59px;top:180px;" width="16" height="16" viewBox="0 0 16 16"><rect x="2" y="2" width="12" height="13" fill="#5a9be6"/><rect x="3" y="3" width="10" height="5.98" fill="#c3dcf8"/><rect x="4.4" y="10.8" width="7.2" height="4.2" fill="#ffffff"/><rect x="6.4" y="12.4" width="2.2" height="2.6" fill="#5a9be6"/></svg>
<svg style="left:82px;top:180px;" width="16" height="16" viewBox="0 0 16 16"><rect x="2" y="2" width="12" height="13" fill="#5a9be6"/><rect x="3" y="3" width="10" height="5.98" fill="#c3dcf8"/><rect x="4.4" y="10.8" width="7.2" height="4.2" fill="#ffffff"/><rect x="6.4" y="12.4" width="2.2" height="2.6" fill="#5a9be6"/><path d="M9.6 13.2L14.2 7.6L15.8 9L11.2 14.6L9.2 15.2Z" fill="#f2a43c" /><path d="M13.4 8.6L14.2 7.6L15.8 9L15 10Z" fill="#e0604a" /></svg>
<svg style="left:105px;top:180px;" width="17" height="17" viewBox="0 0 17 17"><rect x="0.0" y="0.0" width="10.4" height="10.4" fill="#444b58"/><rect x="0.6" y="0.6" width="9.4" height="9.4" fill="#5a9be6"/><rect x="1.4" y="1.4" width="7.8" height="3.6" fill="#c3dcf8"/><rect x="3.0" y="3.0" width="10.4" height="10.4" fill="#444b58"/><rect x="3.6" y="3.6" width="9.4" height="9.4" fill="#5a9be6"/><rect x="4.4" y="4.4" width="7.8" height="3.6" fill="#c3dcf8"/><rect x="6.0" y="6.0" width="10.4" height="10.4" fill="#444b58"/><rect x="6.6" y="6.6" width="9.4" height="9.4" fill="#5a9be6"/><rect x="7.4" y="7.4" width="7.8" height="3.6" fill="#c3dcf8"/><rect x="8" y="12.6" width="5.6" height="3.4" fill="#ffffff"/><rect x="9.6" y="13.8" width="1.8" height="2.2" fill="#5a9be6"/></svg>
<div style="left:129px;top:179px;width:1px;height:18px;background:#9aa7bb;"></div>
<div style="left:131px;top:179px;width:1px;height:18px;background:#9aa7bb;"></div>
<svg style="left:137px;top:180px;" width="16" height="16" viewBox="0 0 16 16"><rect x="3.6" y="1.4" width="8.0" height="3.4" fill="#d9ddf0"/><rect x="1" y="4.4" width="13.2" height="6.4" fill="#5a9be6"/><rect x="3.6" y="8.0" width="8.0" height="6.4" fill="#d9ddf0"/></svg>
<svg style="left:160px;top:181px;" width="16" height="16" viewBox="0 0 16 16"><path d="M0.8 4V1.2H3.6M10.6 1.2H13.6V4M13.6 10.6V13.6H10.6M3.6 13.6H0.8V10.6" fill="none" stroke="#5a9be6" stroke-width="1.2" /><rect x="4.4" y="3.6" width="5.6" height="1.4" fill="#c3dcf8"/><rect x="3.4" y="5" width="7.6" height="2.4" fill="#5a9be6"/><rect x="4.8" y="6.8" width="4.8" height="4.4" fill="#d9ddf0"/></svg>
<svg style="left:183px;top:180px;" width="16" height="16" viewBox="0 0 16 16"><rect x="3.6" y="1.4" width="8.0" height="3.4" fill="#d9ddf0"/><rect x="1" y="4.4" width="13.2" height="6.4" fill="#5a9be6"/><rect x="3.6" y="8.0" width="8.0" height="6.4" fill="#d9ddf0"/><path d="M9.6 12.4H14.4M12.4 10.2L14.6 12.4L12.4 14.6" fill="none" stroke="#f2a43c" stroke-width="1.2" /></svg>
<div style="left:207px;top:179px;width:1px;height:18px;background:#9aa7bb;"></div>
<div style="left:209px;top:179px;width:1px;height:18px;background:#9aa7bb;"></div>
<svg style="left:215px;top:180px;" width="16" height="16" viewBox="0 0 16 16"><path d="M4.6 1L9.6 10.2M11 1L6 10.2" fill="none" stroke="#c9ced8" stroke-width="1.7" /><circle cx="4" cy="12" r="2.4" fill="none" stroke="#4da6ee" stroke-width="1.3"/><circle cx="11.6" cy="12" r="2.4" fill="none" stroke="#4da6ee" stroke-width="1.3"/></svg>
<svg style="left:238px;top:180px;" width="16" height="16" viewBox="0 0 16 16"><path d="M2 1H7.6L10 3.4V11H2Z" fill="#b9d2f0" /><path d="M5.6 4.4H10.6L13.6 7.4V15H5.6Z" fill="#ffffff" /><path d="M10.6 4.4L13.6 7.4H10.6Z" fill="#d8dde6" /></svg>
<svg style="left:261px;top:180px;" width="16" height="16" viewBox="0 0 16 16"><rect x="2" y="2" width="9.4" height="12" fill="#f5ae62"/><rect x="4.4" y="1" width="4.6" height="2" fill="#c97a3c"/><path d="M7.6 7H11.4L13.8 9.4V15.4H7.6Z" fill="#ffffff" /><path d="M11.4 7L13.8 9.4H11.4Z" fill="#d8dde6" /></svg>
<svg style="left:284px;top:180px;" width="16" height="16" viewBox="0 0 16 16"><path d="M1 9.4L7.4 4L12 9L6.8 15.4Z" fill="#ffffff" /><path d="M6.6 3.6L10 1.2L14 5.6L11.4 8.6Z" fill="#4a90d9" /><path d="M12 2.6L14.4 0.6" fill="none" stroke="#4a90d9" stroke-width="1.8" /></svg>
<div style="left:308px;top:179px;width:1px;height:18px;background:#9aa7bb;"></div>
<div style="left:310px;top:179px;width:1px;height:18px;background:#9aa7bb;"></div>
<div style="left:325px;top:177px;width:60px;height:23px;background:#202532;"></div>
<svg style="left:327px;top:180px;" width="16" height="16" viewBox="0 0 16 16"><path d="M1 6.4L6.6 1.6V4.6Q12.4 4.8 13.4 11.6Q10.8 8 6.6 8.2V11.2Z" fill="#b5b5b5" /></svg>
<svg style="left:345px;top:186px;" width="10" height="7" viewBox="0 0 10 7"><path d="M1.00 1.00h7l-3.5 4z" fill="#fff"/></svg>
<svg style="left:356px;top:180px;" width="16" height="16" viewBox="0 0 16 16"><path d="M14 6.4L8.4 1.6V4.6Q2.6 4.8 1.6 11.6Q4.2 8 8.4 8.2V11.2Z" fill="#b5b5b5" /></svg>
<svg style="left:375px;top:186px;" width="10" height="7" viewBox="0 0 10 7"><path d="M1.00 1.00h7l-3.5 4z" fill="#fff"/></svg>
<svg style="left:386px;top:180px;" width="13" height="15" viewBox="0 0 13 15"><path d="M4.2 13.6 L1.3 9.3 Q0.4 7.6 1.8 7.2 Q2.8 7 3.6 8.3 V3.2 Q3.6 2.2 4.5 2.2 Q5.4 2.2 5.4 3.2 V1.6 Q5.4 0.6 6.3 0.6 Q7.2 0.6 7.2 1.6 V2.2 Q7.2 1.3 8.1 1.3 Q9 1.3 9 2.3 V3.5 Q9 2.7 9.9 2.7 Q10.8 2.7 10.8 3.7 V9.6 Q10.8 11.6 9.2 13.6 ZM5.4 3.2V6.5M7.2 2.2V6.5M9 3.5V6.5" fill="none" stroke="#ffffff" stroke-width="1.1" stroke-linejoin="round"/></svg>
<svg style="left:409px;top:180px;" width="16" height="16" viewBox="0 0 16 16"><path d="M8.4 12.4A6 6 0 1 1 12.4 5.4" fill="none" stroke="#4da6ee" stroke-width="1.3" /><path d="M6.6 3.6V7H9" fill="none" stroke="#ffffff" stroke-width="1.1" /><circle cx="9.6" cy="10" r="2.6" fill="none" stroke="#ffffff" stroke-width="1.1"/><path d="M11.6 12L15 15.4" fill="none" stroke="#ffffff" stroke-width="1.2" /></svg>
<svg style="left:431px;top:180px;" width="16" height="16" viewBox="0 0 16 16"><rect x="0.6" y="1" width="14" height="1.6" fill="#4da6ee"/><path d="M1.1 2V9.4H5M14.1 2V6" fill="none" stroke="#ffffff" stroke-width="1.1" /><circle cx="8.8" cy="9.6" r="2.6" fill="none" stroke="#ffffff" stroke-width="1.1"/><path d="M10.8 11.6L13 13.8" fill="none" stroke="#ffffff" stroke-width="1.2" /><path d="M15.4 11V15.6H10.8Z" fill="#ffffff" /></svg>
<svg style="left:453px;top:180px;" width="16" height="16" viewBox="0 0 16 16"><path d="M6.2 4.2H1.6M3.6 2L1.4 4.2L3.6 6.4" fill="none" stroke="#f0b840" stroke-width="1.2" /><circle cx="9" cy="9" r="2.8" fill="none" stroke="#ffffff" stroke-width="1.1"/><path d="M11 11L14.4 14.4" fill="none" stroke="#ffffff" stroke-width="1.2" /></svg>
<div style="left:478px;top:179px;width:1px;height:18px;background:#9aa7bb;"></div>
<div style="left:480px;top:179px;width:1px;height:18px;background:#9aa7bb;"></div>
<svg style="left:486px;top:180px;" width="16" height="16" viewBox="0 0 16 16"><rect x="1.5" y="0.5" width="12" height="14" fill="none" stroke="#ffffff" stroke-width="1"/><rect x="3.2" y="2.8" width="8.4" height="2.2" fill="#4da6ee"/><path d="M3.2 7.4h8.4M3.2 10h8.4" fill="none" stroke="#ffffff" stroke-width="1" stroke-dasharray="1.4 0.9"/><rect x="3.2" y="9.2" width="3" height="1.4" fill="#4da6ee"/><rect x="9.4" y="8.4" width="2.4" height="2" fill="#4da6ee"/><path d="M3.2 12.6h5" fill="none" stroke="#ffffff" stroke-width="1" stroke-dasharray="1.4 0.9"/><rect x="9" y="12" width="2.8" height="1.8" fill="#4da6ee"/></svg>
<svg style="left:509px;top:180px;" width="16" height="16" viewBox="0 0 16 16"><rect x="0.5" y="0.5" width="15" height="14" fill="none" stroke="#ffffff" stroke-width="1"/><path d="M6.5 0.6V14.5" fill="none" stroke="#ffffff" stroke-width="1" /><path d="M2.4 3.2h2.4M2.4 6.2h2.4M2.4 9.2h2.4M2.4 12.2h2.4" fill="none" stroke="#ffffff" stroke-width="1.1" stroke-dasharray="0.9 0.6"/><rect x="2.2" y="2.4" width="2.6" height="1.2" fill="#4da6ee"/><rect x="8.4" y="2.4" width="2" height="2" fill="none" stroke="#dfe6f2" stroke-width="0.9"/><rect x="11.8" y="2.4" width="2" height="2" fill="none" stroke="#dfe6f2" stroke-width="0.9"/><rect x="8.4" y="6.4" width="2" height="2" fill="none" stroke="#dfe6f2" stroke-width="0.9"/><rect x="11.8" y="6.4" width="2" height="2" fill="none" stroke="#dfe6f2" stroke-width="0.9"/><rect x="8.4" y="10.4" width="2" height="2" fill="none" stroke="#dfe6f2" stroke-width="0.9"/><rect x="11.8" y="10.4" width="2" height="2" fill="none" stroke="#dfe6f2" stroke-width="0.9"/></svg>
<svg style="left:532px;top:180px;" width="16" height="16" viewBox="0 0 16 16"><path d="M1.5 1.5H12.5V3.4M12.5 10V14.5H1.5V1.5" fill="none" stroke="#ffffff" stroke-width="1" /><rect x="11" y="4.6" width="2.6" height="9.4" fill="#4da6ee"/><path d="M3.4 4h6M3.4 6.4h6M3.4 8.8h6M3.4 11.2h4" fill="none" stroke="#4da6ee" stroke-width="1.1" /></svg>
<svg style="left:555px;top:180px;" width="17" height="16" viewBox="0 0 17 16"><path d="M1 7H9.6L12 10.2V13.6H1Z" fill="#ffffff" /><path d="M8 2.2L10.8 1L15.8 9.6Q16.2 12 13.4 12.4L12 10.2Z" fill="#e8ebf0" /><circle cx="13.2" cy="9.8" r="1" fill="none" stroke="#9aa2ae" stroke-width="0.8"/></svg>
<div style="left:579px;top:179px;width:1px;height:18px;background:#9aa7bb;"></div>
<div style="left:581px;top:179px;width:1px;height:18px;background:#9aa7bb;"></div>
<svg style="left:587px;top:180px;" width="16" height="16" viewBox="0 0 16 16"><circle cx="7.4" cy="7.6" r="6.6" fill="#48b0f5"/><text x="7.4" y="11.2" font-size="10" font-weight="700" text-anchor="middle" fill="#fff" font-family="Liberation Sans,sans-serif">?</text></svg>
<div style="left:632px;top:177px;width:2px;height:24px;background:#93a3bd;"></div>
<div style="left:636px;top:177px;width:2px;height:24px;background:#93a3bd;"></div>
<svg style="left:643px;top:180px;" width="16" height="16" viewBox="0 0 16 16"><text x="0" y="12.6" font-size="15" fill="#f6bd3a" font-family="Liberation Sans,sans-serif">A</text><path d="M7.4 11.6L12.8 6.0L14.600000000000001 7.6L10.0 12.6L7.0 13.2Z" fill="#b9cde6" /></svg>
<div style="left:664px;top:177px;width:100px;height:22px;background:#202532;"></div>
<div style="left:665px;top:198px;width:98px;height:1px;background:#6d7480;"></div>
<svg style="left:750px;top:184px;" width="10" height="6" viewBox="0 0 10 6"><path d="M0.5 0.5h8.5l-4.25 4.5z" fill="#b4b4b4"/></svg>
<div style="left:767px;top:179px;width:1px;height:18px;background:#9aa7bb;"></div>
<div style="left:769px;top:179px;width:1px;height:18px;background:#9aa7bb;"></div>
<svg style="left:775px;top:180px;" width="16" height="16" viewBox="0 0 16 16"><path d="M0.6 1V13.6M15.2 1V6" fill="none" stroke="#ffffff" stroke-width="1.1" /><path d="M1.4 4.4H14.4M3.6 2.2L1.4 4.4L3.6 6.6M12.2 2.2L14.4 4.4L12.2 6.6" fill="none" stroke="#f6bd3a" stroke-width="1.2" /><path d="M8.4 12.8L13.8 7.199999999999999L15.600000000000001 8.8L11.0 13.8L8.0 14.399999999999999Z" fill="#b9cde6" /></svg>
<div style="left:797px;top:177px;width:100px;height:22px;background:#202532;"></div>
<div style="left:798px;top:198px;width:98px;height:1px;background:#6d7480;"></div>
<svg style="left:883px;top:184px;" width="10" height="6" viewBox="0 0 10 6"><path d="M0.5 0.5h8.5l-4.25 4.5z" fill="#b4b4b4"/></svg>
<div style="left:899px;top:179px;width:1px;height:18px;background:#9aa7bb;"></div>
<div style="left:901px;top:179px;width:1px;height:18px;background:#9aa7bb;"></div>
<svg style="left:907px;top:180px;" width="16" height="16" viewBox="0 0 16 16"><rect x="0.4" y="1" width="14" height="1.4" fill="#5fd068"/><rect x="0.4" y="3.8" width="4" height="4" fill="#e6e6e6"/><rect x="5.4" y="3.8" width="4" height="4" fill="#e6e6e6"/><rect x="10.4" y="3.8" width="4" height="4" fill="#e6e6e6"/><rect x="0.4" y="8.8" width="4" height="4" fill="#e6e6e6"/><rect x="5.4" y="8.8" width="4" height="4" fill="#e6e6e6"/><rect x="10.4" y="8.8" width="4" height="4" fill="#e6e6e6"/><rect x="9" y="7" width="7" height="6.4" fill="#444b58"/><path d="M7.6 12.4L13.0 6.800000000000001L14.8 8.4L10.2 13.4L7.199999999999999 14.0Z" fill="#b9cde6" /></svg>
<div style="left:930px;top:177px;width:100px;height:22px;background:#202532;"></div>
<div style="left:931px;top:198px;width:98px;height:1px;background:#6d7480;"></div>
<svg style="left:1016px;top:184px;" width="10" height="6" viewBox="0 0 10 6"><path d="M0.5 0.5h8.5l-4.25 4.5z" fill="#b4b4b4"/></svg>
<div style="left:1031px;top:179px;width:1px;height:18px;background:#9aa7bb;"></div>
<div style="left:1033px;top:179px;width:1px;height:18px;background:#9aa7bb;"></div>
<svg style="left:1039px;top:180px;" width="16" height="16" viewBox="0 0 16 16"><path d="M11 3H6.4L1.8 11.4M1.5 7.4V11.8H5.6" fill="none" stroke="#ffffff" stroke-width="1.2" /><rect x="11" y="0.6" width="4.2" height="4.2" fill="#f6bd3a"/><path d="M6.8 13.6L12.2 8.0L14.0 9.6L9.4 14.6L6.3999999999999995 15.2Z" fill="#b9cde6" /></svg>
<div style="left:1063px;top:177px;width:100px;height:22px;background:#202532;"></div>
<div style="left:1064px;top:198px;width:98px;height:1px;background:#6d7480;"></div>
<svg style="left:1149px;top:184px;" width="10" height="6" viewBox="0 0 10 6"><path d="M0.5 0.5h8.5l-4.25 4.5z" fill="#b4b4b4"/></svg>
<div style="left:2px;top:204px;width:2px;height:24px;background:#93a3bd;"></div>
<div style="left:6px;top:204px;width:2px;height:24px;background:#93a3bd;"></div>
<svg style="left:13px;top:207px;" width="17" height="17" viewBox="0 0 17 17"><path d="M3 0.6H13L15.6 5H0.4Z" fill="none" stroke="#ffffff" stroke-width="1.1" /><path d="M1.6 6.4L0.4 9.4H15.6L14.4 6.4" fill="none" stroke="#ffffff" stroke-width="1.1" /><path d="M1.6 10.8L0.4 13.8H15.6L14.4 10.8" fill="none" stroke="#ffffff" stroke-width="1.1" /><rect x="8" y="8" width="9" height="9" fill="#444b58"/><rect x="9" y="9" width="7" height="7.4" fill="none" stroke="#4da6ee" stroke-width="1.2"/><path d="M10.6 11.4h4M10.6 13.8h4" fill="none" stroke="#4da6ee" stroke-width="1" /></svg>
<div style="left:34px;top:204px;width:300px;height:22px;background:#202532;"></div>
<div style="left:35px;top:225px;width:298px;height:1px;background:#6d7480;"></div>
<svg style="left:320px;top:211px;" width="10" height="6" viewBox="0 0 10 6"><path d="M0.5 0.5h8.5l-4.25 4.5z" fill="#fff"/></svg>
<svg style="left:38px;top:208px;" width="16" height="16" viewBox="0 0 16 16"><circle cx="7.4" cy="6.6" r="5.8" fill="#f6bd3a"/><rect x="5.2" y="11.6" width="4.4" height="1.6" fill="#f6bd3a"/><rect x="5.8" y="13.6" width="3.2" height="1.4" fill="#f6bd3a"/></svg>
<svg style="left:56px;top:208px;" width="16" height="16" viewBox="0 0 16 16"><circle cx="8" cy="7.6" r="3.2" fill="#f6bd3a"/><rect x="2.1000000000000005" y="1.7" width="2.6" height="2.6" fill="#f6bd3a"/><rect x="11.299999999999999" y="1.7" width="2.6" height="2.6" fill="#f6bd3a"/><rect x="2.1000000000000005" y="10.899999999999999" width="2.6" height="2.6" fill="#f6bd3a"/><rect x="11.299999999999999" y="10.899999999999999" width="2.6" height="2.6" fill="#f6bd3a"/><path d="M8 0.4l1.3 1.8h-2.6zM8 14.8l1.3-1.8h-2.6zM0.8 7.6l1.8-1.3v2.6zM15.2 7.6l-1.8-1.3v2.6z" fill="#f6bd3a" /><rect x="6.9" y="2.6" width="2.2" height="1.4" fill="#f6bd3a"/><rect x="6.9" y="11.2" width="2.2" height="1.4" fill="#f6bd3a"/><rect x="3" y="6.5" width="1.4" height="2.2" fill="#f6bd3a"/><rect x="11.6" y="6.5" width="1.4" height="2.2" fill="#f6bd3a"/></svg>
<svg style="left:74px;top:208px;" width="16" height="16" viewBox="0 0 16 16"><path d="M6.4 3.4H13.6V12.6H4.4V7" fill="none" stroke="#ffffff" stroke-width="1.2" /><path d="M3.6 0.6V7M0.4 3.8H6.8M1.4 1.6L5.8 6M5.8 1.6L1.4 6" fill="none" stroke="#d0d4da" stroke-width="0.8" /></svg>
<svg style="left:93px;top:208px;" width="16" height="16" viewBox="0 0 16 16"><path d="M1.4 6V4.6A3.4 3.4 0 0 1 8.2 4.6V7.6" fill="none" stroke="#3e9ae8" stroke-width="1.6" /><rect x="4.4" y="7.2" width="10" height="7.6" fill="#3e9ae8"/><circle cx="9.4" cy="10.2" r="1.7" fill="#fff"/><rect x="8.5" y="10.6" width="1.8" height="3.4" fill="#ffffff"/></svg>
<div style="left:112px;top:211px;width:12px;height:12px;background:#fff;border:1px solid #000;"></div>
<span class="t" style="left:129.30px;top:206.84px;font-size:12px;color:#d6e8ff;transform:scaleX(0.85);transform-origin:0 50%;-webkit-text-stroke:0;">0</span>
<svg style="left:336px;top:206px;" width="16" height="16" viewBox="0 0 16 16"><path d="M3 0.6H13L15.6 5H0.4Z" fill="none" stroke="#3e9ae8" stroke-width="1.1" /><path d="M1.6 6.4L0.4 9.4H15.6L14.4 6.4" fill="none" stroke="#ffffff" stroke-width="1.1" /><path d="M1.6 10.8L0.4 13.8H15.6L14.4 10.8" fill="none" stroke="#ffffff" stroke-width="1.1" /><rect x="0.4" y="4.2" width="15.2" height="1.2" fill="#3e9ae8"/><circle cx="3.8" cy="2.6" r="2.4" fill="#b9cde6"/></svg>
<svg style="left:359px;top:206px;" width="16" height="16" viewBox="0 0 16 16"><path d="M3 0.6H13L15.6 5H0.4Z" fill="none" stroke="#ffffff" stroke-width="1.1" /><path d="M1.6 6.4L0.4 9.4H15.6L14.4 6.4" fill="none" stroke="#ffffff" stroke-width="1.1" /><path d="M1.6 10.8L0.4 13.8H15.6L14.4 10.8" fill="none" stroke="#ffffff" stroke-width="1.1" /><rect x="0" y="0" width="9.4" height="5.6" fill="#444b58"/><path d="M8.6 4.6V2.8H1.6M3.8 0.6L1.4 2.8L3.8 5" fill="none" stroke="#5fd068" stroke-width="1.2" /></svg>
<svg style="left:382px;top:206px;" width="17" height="17" viewBox="0 0 17 17"><path d="M3 0.6H13L15.6 5H0.4Z" fill="none" stroke="#ffffff" stroke-width="1.1" /><path d="M1.6 6.4L0.4 9.4H15.6L14.4 6.4" fill="none" stroke="#ffffff" stroke-width="1.1" /><path d="M1.6 10.8L0.4 13.8H15.6L14.4 10.8" fill="none" stroke="#ffffff" stroke-width="1.1" /><rect x="6.4" y="6.6" width="10" height="10" fill="#444b58"/><rect x="7.4" y="7.6" width="9" height="8.6" fill="#3e9ae8"/><rect x="8.4" y="10" width="7" height="5.2" fill="#444b58"/><path d="M9.4 11.6h1M11.4 11.6h3M9.4 13.6h1M11.4 13.6h3" fill="none" stroke="#3e9ae8" stroke-width="1" /></svg>
<div style="left:410px;top:204px;width:2px;height:25px;background:#93a3bd;"></div>
<div style="left:414px;top:204px;width:2px;height:25px;background:#93a3bd;"></div>
<div style="left:418px;top:204px;width:155px;height:22px;background:#202532;"></div>
<div style="left:419px;top:225px;width:153px;height:1px;background:#6d7480;"></div>
<svg style="left:559px;top:211px;" width="10" height="6" viewBox="0 0 10 6"><path d="M0.5 0.5h8.5l-4.25 4.5z" fill="#b4b4b4"/></svg>
<div style="left:425px;top:209px;width:12px;height:12px;background:#fff;border:1px solid #000;"></div>
<span class="t" style="left:441.00px;top:204.61px;font-size:11.8px;color:#97a1b3;letter-spacing:0.481px;transform:scaleX(0.86);transform-origin:0 50%;-webkit-text-stroke:0;">JakWarstwa</span>
<div style="left:577px;top:206px;width:1px;height:20px;background:#9aa7bb;"></div>
<div style="left:579px;top:206px;width:1px;height:20px;background:#9aa7bb;"></div>
<div style="left:583px;top:204px;width:169px;height:22px;background:#202532;"></div>
<div style="left:584px;top:225px;width:167px;height:1px;background:#6d7480;"></div>
<svg style="left:738px;top:211px;" width="10" height="6" viewBox="0 0 10 6"><path d="M0.5 0.5h8.5l-4.25 4.5z" fill="#b4b4b4"/></svg>
<div style="left:590px;top:215px;width:61px;height:1px;background:#fff;"></div>
<span class="t" style="left:655.00px;top:204.61px;font-size:11.8px;color:#97a1b3;letter-spacing:0.429px;transform:scaleX(0.86);transform-origin:0 50%;-webkit-text-stroke:0;">JakWarstwa</span>
<div style="left:756px;top:206px;width:1px;height:20px;background:#9aa7bb;"></div>
<div style="left:758px;top:206px;width:1px;height:20px;background:#9aa7bb;"></div>
<div style="left:762px;top:204px;width:122px;height:22px;background:#202532;"></div>
<div style="left:763px;top:225px;width:120px;height:1px;background:#6d7480;"></div>
<svg style="left:870px;top:211px;" width="10" height="6" viewBox="0 0 10 6"><path d="M0.5 0.5h8.5l-4.25 4.5z" fill="#b4b4b4"/></svg>
<div style="left:768px;top:214px;width:37px;height:2px;background:#fff;"></div>
<span class="t" style="left:809.00px;top:204.61px;font-size:11.8px;color:#97a1b3;letter-spacing:-0.054px;transform:scaleX(0.86);transform-origin:0 50%;-webkit-text-stroke:0;">0.30 mm</span>
<div style="left:888px;top:206px;width:1px;height:20px;background:#9aa7bb;"></div>
<div style="left:890px;top:206px;width:1px;height:20px;background:#9aa7bb;"></div>
<div style="left:894px;top:204px;width:116px;height:22px;background:#202532;"></div>
<div style="left:895px;top:225px;width:114px;height:1px;background:#6d7480;"></div>
<svg style="left:996px;top:211px;" width="10" height="6" viewBox="0 0 10 6"><path d="M0.5 0.5h8.5l-4.25 4.5z" fill="#b4b4b4"/></svg>
<span class="t" style="left:899.00px;top:204.61px;font-size:11.8px;color:#97a1b3;letter-spacing:0.219px;transform:scaleX(0.86);transform-origin:0 50%;-webkit-text-stroke:0;">JakKolor</span>
<div style="left:1px;top:232px;width:56px;height:425px;background:#424854;"></div>
<div style="left:57px;top:233px;width:28px;height:425px;background:#424854;"></div>
<div style="left:2px;top:232px;width:26px;height:2px;background:#9aa7bb;"></div>
<div style="left:2px;top:236px;width:26px;height:2px;background:#9aa7bb;"></div>
<div style="left:30px;top:232px;width:26px;height:2px;background:#9aa7bb;"></div>
<div style="left:30px;top:236px;width:26px;height:2px;background:#9aa7bb;"></div>
<div style="left:58px;top:233px;width:26px;height:2px;background:#9aa7bb;"></div>
<div style="left:58px;top:237px;width:26px;height:2px;background:#9aa7bb;"></div>
<div style="left:29px;top:232px;width:1px;height:425px;background:#95a1b4;"></div>
<div style="left:57px;top:233px;width:1px;height:425px;background:#95a1b4;"></div>
<div style="left:1px;top:232px;width:1px;height:425px;background:#97a2b5;"></div>
<div style="left:85px;top:232px;width:2px;height:24px;background:#2f343c;"></div>
<svg style="left:6px;top:243px;" width="16" height="16" viewBox="0 0 16 16"><path d="M1.5 1.5L14.5 14.5" fill="none" stroke="#ffffff" stroke-width="1.15" /><rect x="0.10000000000000009" y="0.10000000000000009" width="3.0" height="3.0" fill="#2ac0f8"/><rect x="12.9" y="12.9" width="3.0" height="3.0" fill="#2ac0f8"/></svg>
<svg style="left:34px;top:243px;" width="16" height="16" viewBox="0 0 16 16"><path d="M1.6 10.4L9.4 3.2Q11.6 1.6 13.6 3.6Q15.4 5.8 13.4 7.8L5.8 14.6Q3.8 16 2 14Q0.4 12 1.6 10.4Z" fill="#ffffff" /><path d="M6.4 6L9.4 3.2Q11.6 1.6 13.6 3.6Q15.4 5.8 13.4 7.8L10.6 10.4Z" fill="#6ab4f4" /></svg>
<svg style="left:62px;top:243px;" width="16" height="16" viewBox="0 0 16 16"><g transform="translate(8 8.8) scale(0.86) translate(-8 -8)"><path d="M2 8H14" fill="none" stroke="#4da6ee" stroke-width="1.2" /><rect x="0.30000000000000004" y="6.5" width="3.0" height="3.0" fill="#5cb4f6"/><rect x="12.7" y="6.5" width="3.0" height="3.0" fill="#ea4a3c"/></g></svg>
<svg style="left:6px;top:265px;" width="16" height="16" viewBox="0 0 16 16"><path d="M2 2L14 14" fill="none" stroke="#ffffff" stroke-width="1.15" stroke-dasharray="2.2 1.6"/><path d="M0.4 0.4L4.4 1.4L1.4 4.4Z" fill="#2ac0f8" /><path d="M15.6 15.6L11.6 14.6L14.6 11.6Z" fill="#2ac0f8" /><path d="M0.6 3.4L3.4 0.6M12.6 15.4L15.4 12.6" fill="none" stroke="#2ac0f8" stroke-width="0.9" /><rect x="6.8" y="6.8" width="2.4" height="2.4" fill="#2ac0f8"/></svg>
<svg style="left:34px;top:265px;" width="16" height="16" viewBox="0 0 16 16"><path d="M3.5 11.5H1.5V1.5H11.5V3.5" fill="none" stroke="#ffffff" stroke-width="1" /><rect x="4.5" y="4.5" width="10" height="10" fill="none" stroke="#4da6ee" stroke-width="1"/><path d="M7 9.5H12M9.5 7V12" fill="none" stroke="#f0b840" stroke-width="1.1" /></svg>
<svg style="left:62px;top:265px;" width="16" height="16" viewBox="0 0 16 16"><g transform="translate(8 8.8) scale(0.86) translate(-8 -8)"><path d="M3.6 7.4V4.6H10.6" fill="none" stroke="#ffffff" stroke-width="1.2" /><path d="M3.6 8.4V11.6" fill="none" stroke="#ffffff" stroke-width="1" stroke-dasharray="1 1"/><rect x="10.9" y="2.9000000000000004" width="3.0" height="3.0" fill="#ea4a3c"/><rect x="2.1" y="11.1" width="3.0" height="3.0" fill="#8ccbf8"/></g></svg>
<svg style="left:6px;top:287px;" width="16" height="16" viewBox="0 0 16 16"><path d="M9.6 2A5.3 5.3 0 0 0 7.4 12.6H14" fill="none" stroke="#ffffff" stroke-width="1.15" /><rect x="8.1" y="0.30000000000000004" width="3.0" height="3.0" fill="#2ac0f8"/><rect x="5.9" y="11.1" width="3.0" height="3.0" fill="#2ac0f8"/><rect x="12.1" y="11.1" width="3.0" height="3.0" fill="#2ac0f8"/></svg>
<svg style="left:34px;top:287px;" width="16" height="16" viewBox="0 0 16 16"><path d="M5.6 3.4V13.4H1.4Z" fill="none" stroke="#ffffff" stroke-width="1.1" stroke-linejoin="round"/><path d="M7.8 0.6V15.4" fill="none" stroke="#ffffff" stroke-width="1.2" /><path d="M10 2.4V14H14.8Z" fill="#f0b840" /></svg>
<svg style="left:62px;top:287px;" width="16" height="16" viewBox="0 0 16 16"><g transform="translate(8 8.8) scale(0.86) translate(-8 -8)"><path d="M3 13L13 3" fill="none" stroke="#ffffff" stroke-width="1.2" /><rect x="1.0" y="11.8" width="3.2" height="3.2" fill="#ea4a3c"/><rect x="11.8" y="1.0" width="3.2" height="3.2" fill="#ea4a3c"/></g></svg>
<svg style="left:6px;top:309px;" width="16" height="16" viewBox="0 0 16 16"><path d="M8 1.6L14.6 6.4L12 14.2H4L1.4 6.4Z" fill="none" stroke="#ffffff" stroke-width="1.3" stroke-linejoin="round"/></svg>
<svg style="left:34px;top:309px;" width="16" height="16" viewBox="0 0 16 16"><path d="M13.6 13.6H5A3.6 3.6 0 0 1 3.4 6.8A4.8 4.8 0 0 1 12.4 5.4A3 3 0 0 1 14.4 8.4" fill="none" stroke="#ffffff" stroke-width="1.2" /><path d="M13.6 11.4H7.4A1.6 1.6 0 0 1 7.4 8.4H8.6A2 2 0 0 1 12 7.6V9.4H13" fill="none" stroke="#f0b840" stroke-width="1.1" /></svg>
<svg style="left:62px;top:309px;" width="16" height="16" viewBox="0 0 16 16"><g transform="translate(8 8.8) scale(0.86) translate(-8 -8)"><path d="M1.6 14.4L14.4 1.6" fill="none" stroke="#ffffff" stroke-width="1.1" /><rect x="6.4" y="6.4" width="3.2" height="3.2" fill="#ea4a3c"/></g></svg>
<svg style="left:6px;top:331px;" width="16" height="16" viewBox="0 0 16 16"><path d="M1.5 3.5H14.5V12.5H1.5Z" fill="none" stroke="#ffffff" stroke-width="1" /><rect x="0.0" y="2.0" width="3.0" height="3.0" fill="#2ac0f8"/><rect x="13.0" y="11.0" width="3.0" height="3.0" fill="#2ac0f8"/></svg>
<svg style="left:34px;top:331px;" width="16" height="16" viewBox="0 0 16 16"><rect x="0.4" y="0.4" width="6.6" height="6.6" fill="#f7a51c"/><rect x="9" y="0.4" width="6.6" height="6.6" fill="#bfd6f0"/><rect x="0.4" y="9" width="6.6" height="6.6" fill="#bfd6f0"/><rect x="9" y="9" width="6.6" height="6.6" fill="#bfd6f0"/><path d="M16 11.6V16H11.6Z" fill="#ffffff" /></svg>
<svg style="left:62px;top:331px;" width="16" height="16" viewBox="0 0 16 16"><g transform="translate(8 8.8) scale(0.86) translate(-8 -8)"><path d="M1.6 1.6L14.4 14.4M14.4 1.6L1.6 14.4" fill="none" stroke="#ffffff" stroke-width="1.1" /><rect x="6.4" y="6.4" width="3.2" height="3.2" fill="#ea4a3c"/></g></svg>
<svg style="left:6px;top:353px;" width="16" height="16" viewBox="0 0 16 16"><path d="M1.6 14.4Q2.6 3.6 14.4 1.6" fill="none" stroke="#ffffff" stroke-width="1.15" /><rect x="0.10000000000000009" y="12.9" width="3.0" height="3.0" fill="#2ac0f8"/><rect x="4.1" y="3.9000000000000004" width="3.0" height="3.0" fill="#2ac0f8"/><rect x="12.9" y="0.10000000000000009" width="3.0" height="3.0" fill="#2ac0f8"/><path d="M15.4 11.6V15.6H11.4Z" fill="#ffffff" /></svg>
<svg style="left:34px;top:353px;" width="16" height="16" viewBox="0 0 16 16"><path d="M8 2V14M2 8H14" fill="none" stroke="#bfd6f0" stroke-width="1.3" /><path d="M8 0.4L10.6 3.6H5.4ZM8 15.6L10.6 12.4H5.4ZM0.4 8L3.6 5.4V10.6ZM15.6 8L12.4 5.4V10.6Z" fill="#bfd6f0" /></svg>
<svg style="left:62px;top:353px;" width="16" height="16" viewBox="0 0 16 16"><g transform="translate(8 8.8) scale(0.86) translate(-8 -8)"><path d="M1.6 1.6L14.4 14.4M14.4 1.6L1.6 14.4" fill="none" stroke="#ffffff" stroke-width="1.1" stroke-dasharray="4.4 1.4"/><rect x="6.3" y="6.3" width="3.4" height="3.4" fill="#ea4a3c"/></g></svg>
<svg style="left:6px;top:375px;" width="16" height="16" viewBox="0 0 16 16"><path d="M14.4 5.6A7 7 0 1 0 14.4 10.4" fill="none" stroke="#ffffff" stroke-width="1.15" /><path d="M8 8H14" fill="none" stroke="#ffffff" stroke-width="1.2" /><rect x="6.9" y="6.5" width="3.0" height="3.0" fill="#2ac0f8"/><rect x="12.9" y="6.5" width="3.0" height="3.0" fill="#2ac0f8"/></svg>
<svg style="left:34px;top:375px;" width="16" height="16" viewBox="0 0 16 16"><path d="M14.6 9.4A6.6 6.6 0 1 1 8.6 3" fill="none" stroke="#bfd6f0" stroke-width="1.3" /><path d="M7.6 0L11.4 3L7.6 6Z" fill="#bfd6f0" /></svg>
<svg style="left:62px;top:375px;" width="16" height="16" viewBox="0 0 16 16"><g transform="translate(8 8.8) scale(0.86) translate(-8 -8)"><path d="M3 8H9" fill="none" stroke="#ffffff" stroke-width="1.2" /><path d="M9.6 8H16" fill="none" stroke="#4da6ee" stroke-width="1.1" stroke-dasharray="1.1 1.1"/><rect x="0.3999999999999999" y="6.4" width="3.2" height="3.2" fill="#ea4a3c"/></g></svg>
<svg style="left:6px;top:397px;" width="16" height="16" viewBox="0 0 16 16"><path d="M4 13.4A3 3 0 0 1 3.6 7.6A4.6 4.6 0 0 1 12.2 6.6A3.4 3.4 0 0 1 12.2 13.4Z" fill="none" stroke="#ffffff" stroke-width="1.3" stroke-linejoin="round"/></svg>
<svg style="left:34px;top:397px;" width="16" height="16" viewBox="0 0 16 16"><rect x="1.5" y="1.5" width="13" height="13" fill="none" stroke="#ffffff" stroke-width="1"/><rect x="9" y="8" width="7" height="7.6" fill="#424854"/><path d="M10.4 9.6H14.4V14.4H10.4Z" fill="none" stroke="#ffffff" stroke-width="1" stroke-dasharray="2 1.2"/><rect x="7.700000000000001" y="7.300000000000001" width="2.2" height="2.2" fill="#f0b840"/></svg>
<svg style="left:62px;top:397px;" width="16" height="16" viewBox="0 0 16 16"><g transform="translate(8 8.8) scale(0.86) translate(-8 -8)"><circle cx="8" cy="8" r="6.4" fill="none" stroke="#ffffff" stroke-width="1.1"/><rect x="7" y="7" width="2" height="2" fill="#ea4a3c"/></g></svg>
<svg style="left:6px;top:419px;" width="16" height="16" viewBox="0 0 16 16"><path d="M1.4 11.6C3.6 1.4 6.4 4.4 8 8C9.6 12.4 13 13 14.6 5.6" fill="none" stroke="#ffffff" stroke-width="1.15" stroke-dasharray="5 1.2"/><rect x="0.19999999999999996" y="10.200000000000001" width="2.4" height="2.4" fill="#2ac0f8"/><rect x="7.2" y="8.200000000000001" width="2.4" height="2.4" fill="#2ac0f8"/><rect x="13.4" y="4.2" width="2.4" height="2.4" fill="#2ac0f8"/></svg>
<svg style="left:34px;top:419px;" width="16" height="16" viewBox="0 0 16 16"><path d="M1.5 4V1.5H14.5V4M14.5 12V14.5H1.5V12M1.5 9.6V11M14.5 9.6V11" fill="none" stroke="#ffffff" stroke-width="1" /><path d="M1.5 5V9M14.5 5V9" fill="none" stroke="#4da6ee" stroke-width="1" stroke-dasharray="1 1"/><path d="M8 12.4V5.4" fill="none" stroke="#f0b840" stroke-width="1.8" /><path d="M8 2.6L11.4 6.6H4.6Z" fill="#f0b840" /></svg>
<svg style="left:62px;top:419px;" width="16" height="16" viewBox="0 0 16 16"><g transform="translate(8 8.8) scale(0.86) translate(-8 -8)"><rect x="1.6" y="1.6" width="12.8" height="12.8" fill="none" stroke="#ffffff" stroke-width="1.2"/><rect x="7" y="7" width="2" height="2" fill="#e8613c"/></g></svg>
<svg style="left:6px;top:441px;" width="16" height="16" viewBox="0 0 16 16"><ellipse cx="8" cy="8.6" rx="7" ry="5.6" fill="none" stroke="#ffffff" stroke-width="1.15"/><rect x="6.5" y="1.2999999999999998" width="3.0" height="3.0" fill="#2ac0f8"/><rect x="0.10000000000000009" y="7.1" width="3.0" height="3.0" fill="#2ac0f8"/><rect x="12.9" y="7.1" width="3.0" height="3.0" fill="#2ac0f8"/></svg>
<svg style="left:34px;top:441px;" width="16" height="16" viewBox="0 0 16 16"><path d="M0.6 7.5H7" fill="none" stroke="#4da6ee" stroke-width="1" stroke-dasharray="1 1"/><path d="M8.6 7.5H15.6" fill="none" stroke="#ffffff" stroke-width="1" /><path d="M10.6 1.4L5.4 14.6" fill="none" stroke="#f0b840" stroke-width="1.2" /></svg>
<svg style="left:62px;top:441px;" width="16" height="16" viewBox="0 0 16 16"><g transform="translate(8 8.8) scale(0.86) translate(-8 -8)"><circle cx="8" cy="8" r="6.2" fill="none" stroke="#ffffff" stroke-width="1.2" stroke-dasharray="3.4 1.46" stroke-dashoffset="1.7"/><rect x="6.9" y="0.7" width="2.2" height="2.2" fill="#ea4a3c"/><rect x="6.9" y="13.1" width="2.2" height="2.2" fill="#ea4a3c"/><rect x="0.7" y="6.9" width="2.2" height="2.2" fill="#ea4a3c"/><rect x="13.1" y="6.9" width="2.2" height="2.2" fill="#ea4a3c"/></g></svg>
<svg style="left:6px;top:463px;" width="16" height="16" viewBox="0 0 16 16"><path d="M8 1.6A6.4 6 0 1 0 14.4 8" fill="none" stroke="#ffffff" stroke-width="1.15" /><rect x="6.699999999999999" y="0.10000000000000009" width="3.0" height="3.0" fill="#2ac0f8"/><rect x="12.9" y="6.1" width="3.0" height="3.0" fill="#2ac0f8"/></svg>
<svg style="left:34px;top:463px;" width="16" height="16" viewBox="0 0 16 16"><path d="M0.4 7.5H5" fill="none" stroke="#ffffff" stroke-width="1" /><path d="M6 7.5H11" fill="none" stroke="#4da6ee" stroke-width="1" stroke-dasharray="1 1"/><path d="M15.2 1L10.4 15" fill="none" stroke="#f0b840" stroke-width="1.3" /></svg>
<svg style="left:62px;top:463px;" width="16" height="16" viewBox="0 0 16 16"><g transform="translate(8 8.8) scale(0.86) translate(-8 -8)"><path d="M13 12.4A6 6 0 1 1 13 3.6" fill="none" stroke="#ffffff" stroke-width="1.3" /><path d="M14.6 1V15" fill="none" stroke="#ffffff" stroke-width="1.2" /><rect x="12.3" y="6.9" width="2.2" height="2.2" fill="#ea4a3c"/></g></svg>
<svg style="left:6px;top:485px;" width="16" height="16" viewBox="0 0 16 16"><path d="M3.5 4V1.5H13.5V11.4" fill="none" stroke="#ffffff" stroke-width="1" /><path d="M3.6 6.5H1.5V12.5H2.6" fill="none" stroke="#2ac0f8" stroke-width="1" /><path d="M4.6 5.4H9.6M7.6 3.2L9.8 5.4L7.6 7.6" fill="none" stroke="#f0b840" stroke-width="1.1" /><circle cx="6.4" cy="12" r="2" fill="none" stroke="#ffffff" stroke-width="1"/><path d="M10.4 12H12.4" fill="none" stroke="#ffffff" stroke-width="1" /><path d="M15.6 11.4V15.6H11.4Z" fill="#ffffff" /></svg>
<svg style="left:34px;top:485px;" width="16" height="16" viewBox="0 0 16 16"><path d="M7.6 2.5H13.5V13.5H2.5V2.5H4.4" fill="none" stroke="#ffffff" stroke-width="1" /><rect x="4.8" y="1.3" width="2.4" height="2.4" fill="#2ac0f8"/></svg>
<svg style="left:62px;top:485px;" width="16" height="16" viewBox="0 0 16 16"><g transform="translate(8 8.8) scale(0.86) translate(-8 -8)"><path d="M8 1.4V13.4M1.4 13.4H14.6" fill="none" stroke="#ffffff" stroke-width="1.2" /><rect x="6.9" y="12.1" width="2.2" height="2.2" fill="#ea4a3c"/></g></svg>
<svg style="left:6px;top:507px;" width="16" height="16" viewBox="0 0 16 16"><path d="M12.5 5V2.5H2.5V11.5H4.6" fill="none" stroke="#ffffff" stroke-width="1" /><circle cx="10" cy="10.6" r="3.6" fill="none" stroke="#ffffff" stroke-width="1.1"/><rect x="0.8999999999999999" y="0.8999999999999999" width="2.2" height="2.2" fill="#2ac0f8"/></svg>
<svg style="left:34px;top:507px;" width="16" height="16" viewBox="0 0 16 16"><path d="M11.6 2.5H13.5V13.5H2.5V2.5H4.4" fill="none" stroke="#ffffff" stroke-width="1" /><rect x="4.9" y="1.4" width="2.2" height="2.2" fill="#2ac0f8"/><rect x="8.9" y="1.4" width="2.2" height="2.2" fill="#2ac0f8"/></svg>
<svg style="left:62px;top:507px;" width="16" height="16" viewBox="0 0 16 16"><g transform="translate(8 8.8) scale(0.86) translate(-8 -8)"><path d="M0.6 11.4L12.4 0.6M3.6 15L15.4 4.2" fill="none" stroke="#ffffff" stroke-width="1.1" /></g></svg>
<svg style="left:6px;top:529px;" width="16" height="16" viewBox="0 0 16 16"><rect x="2.9" y="2.9" width="2.2" height="2.2" fill="#2ac0f8"/><rect x="10.9" y="2.9" width="2.2" height="2.2" fill="#2ac0f8"/><rect x="6.9" y="6.9" width="2.2" height="2.2" fill="#2ac0f8"/><rect x="2.9" y="10.9" width="2.2" height="2.2" fill="#2ac0f8"/><rect x="10.9" y="10.9" width="2.2" height="2.2" fill="#2ac0f8"/></svg>
<svg style="left:34px;top:529px;" width="16" height="16" viewBox="0 0 16 16"><path d="M1.5 15V6.6M14.5 15V6.6" fill="none" stroke="#ffffff" stroke-width="1" /><rect x="6.9" y="1.9" width="2.2" height="2.2" fill="#2ac0f8"/><path d="M0.6 3.4H5.4M3.4 1.2L5.6 3.4L3.4 5.6M15.4 3.4H10.6M12.6 1.2L10.4 3.4L12.6 5.6" fill="none" stroke="#f0b840" stroke-width="1.1" /></svg>
<svg style="left:62px;top:529px;" width="16" height="16" viewBox="0 0 16 16"><g transform="translate(8 8.8) scale(0.86) translate(-8 -8)"><path d="M1.6 1.6H9.4V6.6H14.4V14.4H6.6V9.4H1.6Z" fill="#bfd6f0" /><path d="M1.6 1.6H9.4V6.6H14.4V14.4H6.6V9.4H1.6Z" fill="none" stroke="#ffffff" stroke-width="1.1" /></g></svg>
<svg style="left:6px;top:551px;" width="16" height="16" viewBox="0 0 16 16"><rect x="2.5" y="2.5" width="11" height="11" fill="none" stroke="#ffffff" stroke-width="1"/><path d="M4 8L8 4M4 11.6L11.6 4M6 12.4L12.4 6M9.6 12.4L12.4 9.6" fill="none" stroke="#4da6ee" stroke-width="1.1" /></svg>
<svg style="left:34px;top:551px;" width="16" height="16" viewBox="0 0 16 16"><path d="M13 1.5H14.5V14.5H1.5V13" fill="none" stroke="#ffffff" stroke-width="1" /><path d="M1.5 11.5V1.5H11.6" fill="none" stroke="#4da6ee" stroke-width="1" stroke-dasharray="1 1"/><path d="M1.6 12L12.6 1.6" fill="none" stroke="#f0b840" stroke-width="1.1" /></svg>
<svg style="left:62px;top:551px;" width="16" height="16" viewBox="0 0 16 16"><g transform="translate(8 8.8) scale(0.86) translate(-8 -8)"><rect x="3.9999999999999996" y="5.0" width="3.2" height="3.2" fill="#ea4a3c"/></g></svg>
<svg style="left:6px;top:573px;" width="16" height="16" viewBox="0 0 16 16"><rect x="1.5" y="1.5" width="13" height="13" fill="none" stroke="#4da6ee" stroke-width="1"/><circle cx="8" cy="8" r="3.6" fill="none" stroke="#4da6ee" stroke-width="1.1"/></svg>
<svg style="left:34px;top:573px;" width="16" height="16" viewBox="0 0 16 16"><path d="M13 1.5H14.5V14.5H1.5V13" fill="none" stroke="#ffffff" stroke-width="1" /><path d="M1.5 11.5V1.5H11.6" fill="none" stroke="#4da6ee" stroke-width="1" stroke-dasharray="1 1"/><path d="M1.6 12.6Q2 2.4 12.8 1.8" fill="none" stroke="#f0b840" stroke-width="1.2" /></svg>
<svg style="left:62px;top:573px;" width="16" height="16" viewBox="0 0 16 16"><g transform="translate(8 8.8) scale(0.86) translate(-8 -8)"><path d="M1.6 14.4L14.4 1.6" fill="none" stroke="#ffffff" stroke-width="1.1" /><rect x="5.8999999999999995" y="5.8999999999999995" width="3.4" height="3.4" fill="#ea4a3c"/><rect x="9.5" y="9.5" width="2.2" height="2.2" fill="#5cb4f6"/></g></svg>
<svg style="left:6px;top:595px;" width="16" height="16" viewBox="0 0 16 16"><rect x="1" y="1.6" width="14" height="1.6" fill="#6fd37a"/><rect x="1" y="5" width="4" height="4" fill="#e4e4e4"/><rect x="6" y="5" width="4" height="4" fill="#e4e4e4"/><rect x="11" y="5" width="4" height="4" fill="#e4e4e4"/><rect x="1" y="10" width="4" height="4" fill="#e4e4e4"/><rect x="6" y="10" width="4" height="4" fill="#e4e4e4"/><rect x="11" y="10" width="4" height="4" fill="#e4e4e4"/></svg>
<svg style="left:34px;top:595px;" width="16" height="16" viewBox="0 0 16 16"><circle cx="6.4" cy="9" r="6.2" fill="#bfd6f0"/><path d="M9.4 3.4Q11 1 12.6 2.4" fill="none" stroke="#c8ccd4" stroke-width="1" /><path d="M13.2 2V8M10.2 5H16.2M11 2.8L15.4 7.2M15.4 2.8L11 7.2" fill="none" stroke="#f6bd3a" stroke-width="1" /><circle cx="13.2" cy="5" r="1.3" fill="#424854" stroke="#f6bd3a" stroke-width="0.8"/></svg>
<svg style="left:62px;top:595px;" width="16" height="16" viewBox="0 0 16 16"><g transform="translate(8 8.8) scale(0.86) translate(-8 -8)"><path d="M2.6 14V7A5.4 5.4 0 0 1 13.4 7V11M5.6 14V7.4A2.4 2.4 0 0 1 10.4 7.4V11" fill="none" stroke="#ffffff" stroke-width="1.2" /><rect x="2.4" y="11" width="3.4" height="3.6" fill="#dfe9f5" stroke="#ffffff" stroke-width="1"/><rect x="3.2" y="12.0" width="1.6" height="1.6" fill="#5cb4f6"/><path d="M10.4 11.4L14.4 15.4M14.4 11.4L10.4 15.4" fill="none" stroke="#ea4a3c" stroke-width="1.2" /></g></svg>
<svg style="left:6px;top:617px;" width="16" height="16" viewBox="0 0 16 16"><rect x="2.5" y="2.5" width="11" height="11" fill="none" stroke="#ffffff" stroke-width="1"/><path d="M4.4 8.4L6.8 4.6L9.2 8.4M5.2 7.2H8.4" fill="none" stroke="#f0b840" stroke-width="1.3" /><path d="M10.6 6H12.4M10.6 8H12.4M4.2 10.2H12.2M4.2 12H12.2" fill="none" stroke="#dfe3ea" stroke-width="0.9" /></svg>
<svg style="left:34px;top:617px;" width="16" height="16" viewBox="0 0 16 16"><path d="M0.8 1H13.6V5.4H0.8ZM0.8 5.4V15.6H4.8V5.4M4.8 15.6H7" fill="none" stroke="#4da6ee" stroke-width="1.2" /><circle cx="4.8" cy="5.4" r="1.6" fill="#424854" stroke="#4da6ee" stroke-width="1"/><path d="M7.6 12.4Q10 10.6 12.6 11.6L13.4 14.4Q10 16.6 7.6 14.4Z" fill="#4da6ee" /><path d="M11.4 11.4L13.4 9L16 11.6L14.4 14.4L12.6 14Z" fill="#a4a9b2" /></svg>
<svg style="left:62px;top:617px;" width="16" height="16" viewBox="0 0 16 16"><g transform="translate(8 8.8) scale(0.86) translate(-8 -8)"><path d="M2.6 14V7A5.4 5.4 0 0 1 13.4 7V14M5.6 14V7.4A2.4 2.4 0 0 1 10.4 7.4V14" fill="none" stroke="#ffffff" stroke-width="1.2" /><rect x="2" y="11.4" width="4.2" height="3.6" fill="#ffffff"/><rect x="9.8" y="11.4" width="4.2" height="3.6" fill="#ffffff"/></g></svg>
<div style="left:87px;top:232px;width:1166px;height:24px;background:#2b2f35;"></div>
<div style="left:88px;top:232px;width:10px;height:24px;background:#4a545f;"></div>
<svg style="left:89px;top:240px;" width="8" height="8" viewBox="0 0 8 8"><path d="M0.3 0.8h7.4l-3.7 6.4z" fill="#fff"/></svg>
<div style="left:100px;top:232px;width:173px;height:24px;background:#52647f;"></div>
<svg style="left:102px;top:236px;" width="16" height="16" viewBox="0 0 16 16"><path d="M3.6 0H10L13.6 3.6V15.4H3.6Z" fill="#ffffff" /><path d="M10 0L13.6 3.6H10Z" fill="#b9cde6" /><rect x="0" y="6" width="16" height="7.4" fill="#0b5be0"/><text x="8" y="12" font-size="6.2" font-weight="700" text-anchor="middle" fill="#fff" font-family="Liberation Sans,sans-serif" textLength="14" lengthAdjust="spacingAndGlyphs">DWG</text><rect x="3" y="14.4" width="11" height="1.2" fill="#ffffff"/></svg>
<span class="t" style="left:121.00px;top:234.14px;font-size:12px;color:#fff;font-weight:700;-webkit-text-stroke:0;letter-spacing:-0.142px;">Rysunek1.dwg*</span>
<svg style="left:258px;top:239px;" width="11" height="11" viewBox="0 0 11 11"><path d="M1.5 1.5l8 8M9.5 1.5l-8 8" stroke="#fff" stroke-width="1.8" fill="none"/></svg>
<div style="left:274px;top:232px;width:29px;height:24px;background:#3f4651;"></div>
<svg style="left:280px;top:236px;" width="16" height="16" viewBox="0 0 16 16"><path d="M0.5 3H11L14 6V13H0.5Z" fill="#ffffff" /><path d="M11 3L14 6H11Z" fill="#9cc7f2" /><path d="M3.5 8h6M6.5 5v6" fill="none" stroke="#3f9ae8" stroke-width="1.3" /></svg>
<div style="left:87px;top:256px;width:1166px;height:574px;background:#1a1d23;"></div>
<svg shape-rendering="crispEdges" style="left:0;top:256px;overflow:hidden" width="1253" height="574" viewBox="0 256 1253 574"><polygon points="535.9,255.5 554.4,255.5 555.6,275.6 537.2,270.5" fill="#00ffff"/><polygon points="960.1,371.9 978.5,376.7 979.1,396.4 960.4,391.4" fill="#00ffff"/><polygon points="542,540.5 560.2,545.5 561.4,565.2 543,559.6" fill="#00ffff"/><polygon points="966.1,662.5 984.5,667.4 985.5,687.1 966.4,681.9" fill="#00ffff"/><polygon points="757.5,303.3 749.2,331.4 767.6,336.4" fill="#00ffff"/><polygon points="530,403.4 558.1,400.1 558.5,420.7" fill="#00ffff"/><polygon points="750.8,456.2 769.4,461.2 770.8,481.7 751.9,476" fill="#00ffff"/><polygon points="761.4,455.5 785.7,452 773.6,473.7" fill="#00ffff"/><path d="M751 456.4L769.4 461.4L770.7 481.5" stroke="#7a6a6a" stroke-width="0.8" fill="none"/><polygon points="525.9,610.5 512.4,632.6 537.4,628.6" fill="#00ffff"/><polygon points="754.4,600.7 772.4,606.3 764.9,633.5" fill="#00ffff"/><line x1="969" y1="384.3" x2="735.3" y2="538.8" stroke="#fff" stroke-width="1" stroke-dasharray="3.2 3"/><line x1="735.3" y1="538.8" x2="739.6" y2="828.5" stroke="#fff" stroke-width="1" stroke-dasharray="3.2 3"/><line x1="969" y1="384.3" x2="975.2" y2="674.5" stroke="#fff" stroke-width="1" stroke-dasharray="3.2 3"/><line x1="975.2" y1="674.5" x2="739.6" y2="828.5" stroke="#fff" stroke-width="1" stroke-dasharray="3.2 3"/><line x1="546.5" y1="263.8" x2="1064.5" y2="411.5" stroke="#fff" stroke-width="1"/><line x1="546.5" y1="263.8" x2="311" y2="418.5" stroke="#fff" stroke-width="1"/><line x1="311" y1="418.5" x2="828.4" y2="565.6" stroke="#fff" stroke-width="1"/><line x1="828.4" y1="565.6" x2="1064.5" y2="411.5" stroke="#fff" stroke-width="1"/><line x1="311" y1="418.5" x2="316.8" y2="708.2" stroke="#fff" stroke-width="1"/><line x1="546.5" y1="263.8" x2="552.2" y2="553.6" stroke="#fff" stroke-width="1"/><line x1="552.2" y1="553.6" x2="316.8" y2="708.2" stroke="#fff" stroke-width="1"/><line x1="552.2" y1="553.6" x2="1070.5" y2="700.8" stroke="#fff" stroke-width="1"/><line x1="1064.5" y1="411.5" x2="1070.5" y2="700.8" stroke="#fff" stroke-width="1"/><line x1="828.4" y1="565.6" x2="833.4" y2="830" stroke="#fff" stroke-width="1"/><line x1="316.8" y1="708.2" x2="744.8" y2="830" stroke="#fff" stroke-width="1"/><line x1="1070.5" y1="700.8" x2="874.7" y2="830" stroke="#fff" stroke-width="1"/><polygon points="963,516.4 963,536.6 981,536 990.5,534.2" fill="#ff0000"/><path d="M966.5 529.3h11M972.3 524v11" stroke="#ffb43c" stroke-width="1" fill="none"/><line x1="972.3" y1="529.3" x2="1253" y2="609.5" stroke="#00d000" stroke-width="1" stroke-dasharray="4 4"/><line x1="1028.9" y1="537.2" x2="1125" y2="564" stroke="#ff0000" stroke-width="1"/><line x1="995" y1="597.5" x2="1096.8" y2="530.5" stroke="#0000ff" stroke-width="1"/><line x1="1067.6" y1="430" x2="1069.4" y2="592.5" stroke="#00ff00" stroke-width="1"/><path d="M1062.5 551.5l10 10M1072.5 551.5l-10 10" stroke="#fff" stroke-width="1" fill="none"/><path d="M164.5 693L166 763.5M159.2 706.7L164.5 693L169.8 708.9M159.2 762.6L171.3 765.7L171.6 778.1L159.8 775ZM171.6 772.8L237.4 790.2M221.9 782.1L237.4 790.2L224.1 792.7M159.8 774.1L117.3 802" stroke="#fff" stroke-width="1" fill="none"/><path d="M1193 271h10v3h-10z" fill="#ececec"/><path d="M1216 265.5h6.5v7" stroke="#e4e4e4" stroke-width="1.4" fill="none"/><rect x="1214" y="268" width="6" height="6" stroke="#ececec" stroke-width="2.4" fill="none"/><path d="M1233.6 266l8 8.4M1241.6 266l-8 8.4" stroke="#ececec" stroke-width="2.4" fill="none"/></svg>
<span class="t" style="left:156.20px;top:664.03px;font-size:23px;color:#fff;font-family:'DejaVu Sans Light','DejaVu Sans',sans-serif;font-weight:200;-webkit-text-stroke:0;">Y</span>
<span class="t" style="left:247.80px;top:787.03px;font-size:23px;color:#fff;font-family:'DejaVu Sans Light','DejaVu Sans',sans-serif;font-weight:200;-webkit-text-stroke:0;">X</span>
<span class="t" style="left:97.00px;top:802.03px;font-size:23px;color:#fff;font-family:'DejaVu Sans Light','DejaVu Sans',sans-serif;font-weight:200;-webkit-text-stroke:0;">Z</span>
<div style="left:1085px;top:564px;width:114px;height:19px;background:#ffffe1;border:1px solid #6b6b6b;"></div>
<span class="t" style="left:1088.70px;top:563.62px;font-size:11.5px;color:#0d0d12;letter-spacing:-0.109px;-webkit-text-stroke:0;">Biegun: 59.7985 &lt; 0°</span>
<div style="left:1253px;top:232px;width:6px;height:668px;background:#333a46;"></div>
<div style="left:1257px;top:233px;width:2px;height:667px;background:#2c2f35;"></div>
<div style="left:1259px;top:233px;width:315px;height:667px;background:#424b58;"></div>
<div style="left:1259px;top:233px;width:315px;height:24px;background:#4e5966;"></div>
<div style="left:1574px;top:232px;width:4px;height:668px;background:#2f343c;"></div>
<span class="t" style="left:1270.40px;top:235.32px;font-size:13.5px;color:#fff;font-weight:700;-webkit-text-stroke:0;letter-spacing:0.910px;">Właściwości</span>
<svg style="left:1555px;top:237px;" width="11" height="11" viewBox="0 0 11 11"><path d="M0.7 0.7l9.6 9.6M10.3 0.7l-9.6 9.6" stroke="#fff" stroke-width="1.2" fill="none"/></svg>
<span class="t" style="left:1272.60px;top:266.99px;font-size:11px;color:#fff;letter-spacing:-0.255px;">Bryła 3D</span>
<svg style="left:1479px;top:273px;" width="13" height="8" viewBox="0 0 13 8"><path d="M1.00 1.75h10l-5.0 5.5z" fill="#fff"/></svg>
<div style="left:1268px;top:291px;width:225px;height:1px;background:#586270;"></div>
<div style="left:1497px;top:265px;width:21px;height:21px;background:transparent;border:1px solid #515b69;"></div>
<svg style="left:1499px;top:267px;" width="17" height="17" viewBox="0 0 17 17"><path d="M4.4 10.4H1.6V1.6H10.4V4.4M12.6 15.4H15.4V12.6" fill="none" stroke="#ffffff" stroke-width="1.1" /><rect x="4.6" y="4.6" width="8.4" height="8.4" fill="none" stroke="#ffffff" stroke-width="1.1"/><path d="M6.4 8.8H11.2M8.8 6.4V11.2" fill="none" stroke="#f6bd3a" stroke-width="1.2" /></svg>
<div style="left:1521px;top:265px;width:21px;height:21px;background:transparent;border:1px solid #515b69;"></div>
<svg style="left:1523px;top:267px;" width="17" height="17" viewBox="0 0 17 17"><rect x="6.6" y="0.6" width="9" height="8.6" fill="#52b4f8"/><path d="M4.6 4.4A5 5 0 1 0 10.4 11" fill="none" stroke="#c9ced6" stroke-width="1.2" /><path d="M10.6 7.6V15.4L12.4 13.6L13.6 16.4L14.8 15.8L13.6 13.2H16Z" fill="#424b58" stroke="#fff" stroke-width="0.9" stroke-linejoin="round"/></svg>
<div style="left:1545px;top:265px;width:21px;height:21px;background:transparent;border:1px solid #515b69;"></div>
<svg style="left:1547px;top:267px;" width="17" height="17" viewBox="0 0 17 17"><path d="M1.4 1.6V11.4L3.8 9.2L5.6 13L7 12.2L5.2 8.6H8.4Z" fill="none" stroke="#fff" stroke-width="1" stroke-linejoin="round"/><path d="M13 3.4L8.6 9H11.2L9.4 13.6L14.8 7.4H12L14.6 3.4Z" fill="#f6bd3a" /></svg>
<span class="t" style="left:1272.00px;top:318.69px;font-size:11px;color:#fff;font-weight:700;-webkit-text-stroke:0;letter-spacing:0.042px;">Ogólne</span>
<div style="left:1267px;top:338px;width:274px;height:1px;background:#e6e6e6;"></div>
<svg style="left:1526px;top:322px;" width="7" height="11" viewBox="0 0 7 11"><path d="M6.5 0.3v10.4L0.5 5.5z" fill="#e6e6e6"/></svg>
<span class="t" style="left:1272.00px;top:369.49px;font-size:11px;color:#fff;font-weight:700;-webkit-text-stroke:0;letter-spacing:-0.053px;">Geometria</span>
<div style="left:1267px;top:388px;width:274px;height:1px;background:#e6e6e6;"></div>
<svg style="left:1526px;top:377px;" width="11" height="6" viewBox="0 0 11 6"><path d="M0.2 0.4h10.6L5.5 5.6z" fill="#e6e6e6"/></svg>
<div style="left:1369px;top:389px;width:1px;height:200px;background:#596371;"></div>
<span class="t" style="left:1272.00px;top:394.19px;font-size:11px;color:#fff;letter-spacing:-0.027px;">Tyb bryły</span>
<span class="t" style="left:1373.00px;top:391.89px;font-size:11px;color:#8e96a2;letter-spacing:-0.088px;">Kostka</span>
<div style="left:1268px;top:414px;width:274px;height:1px;background:#596371;"></div>
<span class="t" style="left:1272.00px;top:419.19px;font-size:11px;color:#fff;letter-spacing:-0.328px;">Pozycja X</span>
<span class="t" style="left:1373.00px;top:416.89px;font-size:11px;color:#fff;letter-spacing:-0.113px;">479.6599</span>
<div style="left:1268px;top:439px;width:274px;height:1px;background:#596371;"></div>
<span class="t" style="left:1272.00px;top:444.19px;font-size:11px;color:#fff;letter-spacing:-0.440px;">Pozycja Y</span>
<span class="t" style="left:1373.00px;top:441.89px;font-size:11px;color:#fff;letter-spacing:-0.127px;">421.0044</span>
<div style="left:1268px;top:464px;width:274px;height:1px;background:#596371;"></div>
<span class="t" style="left:1272.00px;top:469.19px;font-size:11px;color:#fff;letter-spacing:-0.287px;">Pozycja Z</span>
<span class="t" style="left:1373.00px;top:466.89px;font-size:11px;color:#fff;">0</span>
<div style="left:1268px;top:489px;width:274px;height:1px;background:#596371;"></div>
<span class="t" style="left:1272.00px;top:494.19px;font-size:11px;color:#fff;letter-spacing:0.392px;">Długość</span>
<span class="t" style="left:1373.00px;top:491.89px;font-size:11px;color:#fff;letter-spacing:-0.127px;">268.3522</span>
<div style="left:1268px;top:514px;width:274px;height:1px;background:#596371;"></div>
<span class="t" style="left:1272.00px;top:519.19px;font-size:11px;color:#fff;letter-spacing:-0.045px;">Szerokość</span>
<span class="t" style="left:1373.00px;top:516.89px;font-size:11px;color:#fff;letter-spacing:-0.127px;">168.7457</span>
<div style="left:1268px;top:539px;width:274px;height:1px;background:#596371;"></div>
<span class="t" style="left:1272.00px;top:544.19px;font-size:11px;color:#fff;letter-spacing:0.138px;">Wysokość</span>
<span class="t" style="left:1373.00px;top:541.89px;font-size:11px;color:#fff;letter-spacing:-0.127px;">217.6047</span>
<div style="left:1268px;top:564px;width:274px;height:1px;background:#596371;"></div>
<span class="t" style="left:1272.00px;top:569.19px;font-size:11px;color:#fff;letter-spacing:0.871px;">Obrót</span>
<span class="t" style="left:1373.00px;top:566.89px;font-size:11px;color:#8e96a2;">0</span>
<div style="left:1268px;top:589px;width:274px;height:1px;background:#596371;"></div>
<span class="t" style="left:1272.00px;top:618.99px;font-size:11px;color:#fff;font-weight:700;-webkit-text-stroke:0;letter-spacing:-0.101px;">Historia bryły</span>
<div style="left:1267px;top:638px;width:274px;height:1px;background:#e6e6e6;"></div>
<svg style="left:1526px;top:627px;" width="11" height="6" viewBox="0 0 11 6"><path d="M0.2 0.4h10.6L5.5 5.6z" fill="#e6e6e6"/></svg>
<div style="left:1369px;top:639px;width:1px;height:25px;background:#596371;"></div>
<span class="t" style="left:1272.00px;top:644.19px;font-size:11px;color:#fff;letter-spacing:0.315px;">Historia</span>
<span class="t" style="left:1373.00px;top:641.99px;font-size:11px;color:#fff;letter-spacing:-0.208px;">Brak</span>
<div style="left:1268px;top:664px;width:274px;height:1px;background:#596371;"></div>
<div style="left:87px;top:830px;width:1166px;height:16px;background:#2b2e34;"></div>
<div style="left:88px;top:831px;width:14px;height:14px;background:#3f4651;"></div>
<svg style="left:88px;top:831px;" width="14" height="14" viewBox="0 0 14 14"><path d="M2 9.6L7 4L12 9.6Z" fill="#ffffff" /></svg>
<div style="left:104px;top:831px;width:14px;height:14px;background:#3f4651;"></div>
<svg style="left:104px;top:831px;" width="14" height="14" viewBox="0 0 14 14"><rect x="3.4" y="3" width="1.3" height="8.4" fill="#8f97a3"/><path d="M5 7.2L10.4 3V11.4Z" fill="#8f97a3" /></svg>
<div style="left:120px;top:831px;width:14px;height:14px;background:#3f4651;"></div>
<svg style="left:120px;top:831px;" width="14" height="14" viewBox="0 0 14 14"><path d="M4.6 7.2L10 3V11.4Z" fill="#8f97a3" /></svg>
<div style="left:136px;top:831px;width:14px;height:14px;background:#3f4651;"></div>
<svg style="left:136px;top:831px;" width="14" height="14" viewBox="0 0 14 14"><path d="M9.8 7.2L4.4 3V11.4Z" fill="#8f97a3" /></svg>
<div style="left:152px;top:831px;width:14px;height:14px;background:#3f4651;"></div>
<svg style="left:152px;top:831px;" width="14" height="14" viewBox="0 0 14 14"><rect x="9.4" y="3" width="1.3" height="8.4" fill="#8f97a3"/><path d="M9 7.2L3.6 3V11.4Z" fill="#8f97a3" /></svg>
<div style="left:168px;top:831px;width:66px;height:14px;background:#52647f;"></div>
<span class="t" style="left:179.70px;top:826.92px;font-size:13.5px;color:#fff;font-weight:700;-webkit-text-stroke:0;letter-spacing:0.900px;">Model</span>
<div style="left:236px;top:831px;width:70px;height:14px;background:#3f4651;"></div>
<span class="t" style="left:247.10px;top:827.10px;font-size:13px;color:#fff;letter-spacing:-0.161px;">Arkusz1</span>
<div style="left:308px;top:831px;width:70px;height:14px;background:#3f4651;"></div>
<span class="t" style="left:319.00px;top:827.10px;font-size:13px;color:#fff;letter-spacing:0.005px;">Arkusz2</span>
<div style="left:380px;top:831px;width:31px;height:14px;background:#3f4651;"></div>
<span class="t" style="left:391.30px;top:827.64px;font-size:12px;color:#fff;font-weight:700;-webkit-text-stroke:0;">+</span>
<div style="left:1px;top:850px;width:1252px;height:50px;background:#2b2f36;"></div>
<div style="left:2px;top:851px;width:21px;height:49px;background:#454c59;"></div>
<div style="left:24px;top:851px;width:2px;height:49px;background:#3b424d;"></div>
<svg style="left:9px;top:855px;" width="11" height="11" viewBox="0 0 11 11"><path d="M0.5 0.5l10 10M10.5 0.5l-10 10" stroke="#6d7581" stroke-width="1.5" fill="none"/></svg>
<span class="t" style="left:26.30px;top:849.91px;font-size:12.4px;color:#b9c0cb;font-family:'DejaVu Sans Mono','Liberation Mono',monospace;letter-spacing:0.535px;">** ROZCIĄGNIJ **</span>
<div style="left:26px;top:879px;width:1227px;height:1px;background:#59616d;"></div>
<span class="t" style="left:26.30px;top:880.01px;font-size:12.4px;color:#b9c0cb;font-family:'DejaVu Sans Mono','Liberation Mono',monospace;letter-spacing:0.535px;">Podaj punkt rozciągnięcia lub [punkt Bazowy/Kopiuj/Cofnij/Wyjście]: </span>
<div style="left:572px;top:881px;width:1px;height:14px;background:#d0d0d0;"></div>
<div style="left:1237px;top:851px;width:15px;height:28px;background:#3a414c;"></div>
<div style="left:1238px;top:858px;width:13px;height:5px;background:#555d69;"></div>
<svg style="left:1240px;top:853px;" width="9" height="24" viewBox="0 0 9 24"><path d="M1.5 5l3-3l3 3M1.5 16l3 3l3-3" stroke="#6f7783" stroke-width="1.3" fill="none"/></svg>
<div style="left:1px;top:900px;width:1577px;height:27px;background:#333a46;"></div>
<span class="t" style="left:12.20px;top:905.78px;font-size:9.3px;color:#fff;font-family:'DejaVu Sans Mono','Liberation Mono',monospace;letter-spacing:0.4px;">673.6345, 421.0044, 0.0000</span>
<div style="left:11px;top:924px;width:248px;height:1px;background:#4d545f;"></div>
<div style="left:336px;top:904px;width:20px;height:21px;background:#546279;border:1px solid #3d97e8;"></div>
<div style="left:360px;top:904px;width:20px;height:21px;background:#546279;border:1px solid #3d97e8;"></div>
<div style="left:384px;top:904px;width:20px;height:21px;background:#546279;border:1px solid #3d97e8;"></div>
<div style="left:408px;top:904px;width:20px;height:21px;background:#546279;border:1px solid #3d97e8;"></div>
<div style="left:480px;top:904px;width:20px;height:21px;background:#546279;border:1px solid #3d97e8;"></div>
<div style="left:528px;top:904px;width:20px;height:21px;background:#546279;border:1px solid #3d97e8;"></div>
<svg style="left:267px;top:907px;" width="16" height="16" viewBox="0 0 16 16"><path d="M0.5 0V13M4.5 0V13M8.5 0V13M0 0.5H13M0 4.5H13M0 8.5H13" fill="none" stroke="#ffffff" stroke-width="1" /><rect x="12" y="0" width="2" height="14.4" fill="#4aaaf2"/><rect x="0" y="12.4" width="14" height="2" fill="#4aaaf2"/></svg>
<svg style="left:291px;top:907px;" width="16" height="16" viewBox="0 0 16 16"><path d="M4.5 1V13M9.5 1V13M1 4.5H13M1 9.5H13" fill="none" stroke="#4aaaf2" stroke-width="1" /><rect x="0.5" y="0.5" width="13" height="13" fill="none" stroke="#ffffff" stroke-width="1"/></svg>
<svg style="left:315px;top:907px;" width="16" height="16" viewBox="0 0 16 16"><path d="M1 9.5H5.5V13" fill="none" stroke="#4aaaf2" stroke-width="1" /><path d="M0.5 0V13.5H14.4" fill="none" stroke="#ffffff" stroke-width="1" /></svg>
<svg style="left:338px;top:907px;" width="16" height="16" viewBox="0 0 16 16"><circle cx="7.9" cy="7.8" r="6.4" fill="none" stroke="#ffffff" stroke-width="1.1"/><path d="M7.9 7.8H15M7.9 7.8L14 1.4" fill="none" stroke="#4aaaf2" stroke-width="1.1" /></svg>
<svg style="left:362px;top:907px;" width="16" height="16" viewBox="0 0 16 16"><rect x="1.5" y="0.5" width="13" height="13" fill="none" stroke="#ffffff" stroke-width="1.1"/><rect x="1.5" y="0.5" width="4" height="4" fill="none" stroke="#e8453c" stroke-width="1.1"/></svg>
<svg style="left:386px;top:907px;" width="16" height="16" viewBox="0 0 16 16"><path d="M1.6 13.5L13.6 2M1.6 13.5H14.6" fill="none" stroke="#ffffff" stroke-width="1.1" /><rect x="7" y="6.6" width="2.4" height="2.4" fill="#546279" stroke="#4aaaf2" stroke-width="1"/></svg>
<svg style="left:410px;top:907px;" width="16" height="16" viewBox="0 0 16 16"><path d="M3.5 1.6V13.4M3.6 13.5H14.6M4 13L8 9" fill="none" stroke="#ffffff" stroke-width="1.1" /><path d="M3.5 0.2L5.4 3H1.6ZM15.8 13.5L13 15.4V11.6ZM2.2 12.2H4.8V14.8H2.2Z" fill="#ffffff" /><path d="M12.2 0.6L8.4 5.6H10.6L9.4 9.2L14 4.2H11.6Z" fill="#f6bd3a" /></svg>
<svg style="left:435px;top:907px;" width="16" height="16" viewBox="0 0 16 16"><path d="M0 5.5H7.4M3.5 1.6V9.2" fill="none" stroke="#ffffff" stroke-width="1.2" /><rect x="6" y="8.6" width="8" height="3.4" fill="none" stroke="#4aaaf2" stroke-width="1.2"/></svg>
<svg style="left:458px;top:907px;" width="16" height="16" viewBox="0 0 16 16"><rect x="2" y="2" width="12" height="1" fill="#ffffff"/><rect x="2" y="5" width="12" height="2" fill="#ffffff"/><rect x="2" y="9" width="12" height="3" fill="#ffffff"/></svg>
<svg style="left:482px;top:907px;" width="16" height="16" viewBox="0 0 16 16"><defs><pattern id="chk" width="2" height="2" patternUnits="userSpaceOnUse"><rect width="2" height="2" fill="#fff"/><rect width="1" height="1" fill="#555"/><rect x="1" y="1" width="1" height="1" fill="#555"/></pattern></defs><rect x="1.6" y="1.6" width="12.8" height="12.8" rx="2.4" fill="url(#chk)" stroke="#fff" stroke-width="1.2"/></svg>
<svg style="left:506px;top:907px;" width="16" height="16" viewBox="0 0 16 16"><path d="M0 4.5H7.4M3.5 0.6V8.2" fill="none" stroke="#ffffff" stroke-width="1.2" /><rect x="6" y="7" width="5.4" height="5.4" fill="#ffffff"/><rect x="8.6" y="9.4" width="4" height="4" fill="#546279" stroke="#4aaaf2" stroke-width="1.2"/><rect x="9.6" y="10.4" width="2" height="2" fill="#ffffff"/></svg>
<svg style="left:530px;top:907px;" width="16" height="16" viewBox="0 0 16 16"><rect x="5.6" y="0.6" width="9" height="9.6" fill="#dfe6f2"/><path d="M8.5 0.6V10M11.5 0.6V10M5.6 3.5H14.6M5.6 6.5H14.6" fill="none" stroke="#546279" stroke-width="1" /><rect x="1" y="4.6" width="9.6" height="9.6" fill="#546279"/><rect x="1.6" y="5.2" width="8.4" height="8.4" fill="none" stroke="#4aaaf2" stroke-width="1.4" stroke-dasharray="1.6 1"/><rect x="4.2" y="7.8" width="3.2" height="3.2" fill="none" stroke="#4aaaf2" stroke-width="1.3"/><path d="M15.2 8.6V13H11M12.6 11.2L10.8 13L12.6 14.8" fill="none" stroke="#f6bd3a" stroke-width="1.1" /></svg>
<svg style="left:1269px;top:905px;" width="16" height="16" viewBox="0 0 16 16"><path d="M0 1.5H16M14.5 0V11.6M1.5 3.4V15M0 13.5H16" fill="none" stroke="#52b6ff" stroke-width="1.1" /><text x="8" y="11.4" font-size="9.4" text-anchor="middle" fill="#6cc0ff" font-family="Liberation Sans,sans-serif" textLength="10.2" lengthAdjust="spacingAndGlyphs">0.0</text></svg>
<span class="t" style="left:1288.20px;top:903.38px;font-size:9.3px;color:#b4b4b4;font-family:'DejaVu Sans Mono','Liberation Mono',monospace;letter-spacing:0.4px;-webkit-text-stroke:0;">Millimetry</span>
<svg style="left:1352px;top:908px;" width="12" height="8" viewBox="0 0 12 8"><path d="M1.00 1.00h9l-4.5 5z" fill="#fff"/></svg>
<svg style="left:1371px;top:905px;" width="16" height="16" viewBox="0 0 16 16"><path d="M8 0.8L10.4 6.2L9.6 8.4L12.4 9.6L15.6 15.4L8 13L0.4 15.4L3.6 9.6L6.4 8.4L5.6 6.2Z" fill="#c9dbf0" /><path d="M8 0.8L10.4 6.2L9.6 8.4L12.4 9.6L15.6 15.4L8 13L0.4 15.4L3.6 9.6L6.4 8.4L5.6 6.2Z" fill="none" stroke="#4fb3ff" stroke-width="1" stroke-linejoin="round"/></svg>
<span class="t" style="left:1390.70px;top:903.38px;font-size:9.3px;color:#b4b4b4;font-family:'DejaVu Sans Mono','Liberation Mono',monospace;letter-spacing:0.4px;-webkit-text-stroke:0;">1:1</span>
<svg style="left:1412px;top:908px;" width="12" height="8" viewBox="0 0 12 8"><path d="M1.00 1.00h9l-4.5 5z" fill="#fff"/></svg>
<svg style="left:1431px;top:905px;" width="16" height="16" viewBox="0 0 16 16"><path d="M8 0.8L10.4 6.2L9.6 8.4L12.4 9.6L15.6 15.4L8 13L0.4 15.4L3.6 9.6L6.4 8.4L5.6 6.2Z" fill="#c9dbf0" /><path d="M8 0.8L10.4 6.2L9.6 8.4L12.4 9.6L15.6 15.4L8 13L0.4 15.4L3.6 9.6L6.4 8.4L5.6 6.2Z" fill="none" stroke="#4fb3ff" stroke-width="1" stroke-linejoin="round"/><circle cx="12.6" cy="11.4" r="3.2" fill="#333a46"/><circle cx="12.6" cy="11.4" r="2.5" fill="#f6bd3a"/><rect x="11.2" y="14.4" width="2.8" height="1" fill="#f6bd3a"/></svg>
<svg style="left:1453px;top:905px;" width="16" height="16" viewBox="0 0 16 16"><path d="M8 0.8L10.4 6.2L9.6 8.4L12.4 9.6L15.6 15.4L8 13L0.4 15.4L3.6 9.6L6.4 8.4L5.6 6.2Z" fill="#c9dbf0" /><path d="M8 0.8L10.4 6.2L9.6 8.4L12.4 9.6L15.6 15.4L8 13L0.4 15.4L3.6 9.6L6.4 8.4L5.6 6.2Z" fill="none" stroke="#4fb3ff" stroke-width="1" stroke-linejoin="round"/><path d="M5.4 0.6L1 6H3.4L2.2 9.4L7 4.2H4.4L6.8 0.6Z" fill="#333a46" /><path d="M5 1.6L2.4 5.2H4.4L3.4 7.8L6 4.8H4L5.6 1.6Z" fill="#8aa2c6" /></svg>
<svg style="left:1474px;top:905px;" width="16" height="16" viewBox="0 0 16 16"><rect x="1" y="4.6" width="8" height="8" fill="none" stroke="#ffffff" stroke-width="1.1"/><circle cx="11.2" cy="4.6" r="3.8" fill="#333a46" stroke="#ffffff" stroke-width="1.1"/><path d="M9.6 8.6L13 12L9.6 15.4L6.2 12Z" fill="#333a46" stroke="#ffffff" stroke-width="1.1"/></svg>
<svg style="left:1497px;top:905px;" width="16" height="16" viewBox="0 0 16 16"><circle cx="7.6" cy="7.8" r="4.2" fill="none" stroke="#4aaaf2" stroke-width="2.4"/><rect x="6.6" y="0.4" width="2" height="2.8" fill="#4aaaf2" transform="rotate(0 7.6 7.8)"/><rect x="6.6" y="0.4" width="2" height="2.8" fill="#4aaaf2" transform="rotate(45 7.6 7.8)"/><rect x="6.6" y="0.4" width="2" height="2.8" fill="#4aaaf2" transform="rotate(90 7.6 7.8)"/><rect x="6.6" y="0.4" width="2" height="2.8" fill="#4aaaf2" transform="rotate(135 7.6 7.8)"/><rect x="6.6" y="0.4" width="2" height="2.8" fill="#4aaaf2" transform="rotate(180 7.6 7.8)"/><rect x="6.6" y="0.4" width="2" height="2.8" fill="#4aaaf2" transform="rotate(225 7.6 7.8)"/><rect x="6.6" y="0.4" width="2" height="2.8" fill="#4aaaf2" transform="rotate(270 7.6 7.8)"/><rect x="6.6" y="0.4" width="2" height="2.8" fill="#4aaaf2" transform="rotate(315 7.6 7.8)"/></svg>
<svg style="left:1519px;top:906px;" width="16" height="16" viewBox="0 0 16 16"><path d="M1 5V1H5M10 1H14V5M14 10V14H10M5 14H1V10M1.4 1.4L6 6M13.6 1.4L9 6M13.6 13.6L9 9M1.4 13.6L6 9" fill="none" stroke="#ffffff" stroke-width="1.1" /></svg>
<svg style="left:1541px;top:905px;" width="16" height="16" viewBox="0 0 16 16"><rect x="1" y="1.8" width="14" height="1.6" fill="#4aaaf2"/><rect x="1" y="7.4" width="14" height="1.6" fill="#4aaaf2"/><rect x="1" y="13" width="14" height="1.6" fill="#4aaaf2"/></svg>
<svg style="left:1564px;top:913px;" width="14" height="14" viewBox="0 0 14 14"><path d="M13.5 1L1 13.5M13.5 5L5 13.5M13.5 9L9 13.5" stroke="#aab0ba" stroke-width="1.2" fill="none"/></svg>
<div style="left:0px;top:31px;width:1px;height:897px;background:#0e7bd6;"></div>
<div style="left:1578px;top:31px;width:1px;height:897px;background:#0e7bd6;"></div>
<div style="left:0px;top:927px;width:1579px;height:1px;background:#0e7bd6;"></div>
</div>
</body>
</html>
